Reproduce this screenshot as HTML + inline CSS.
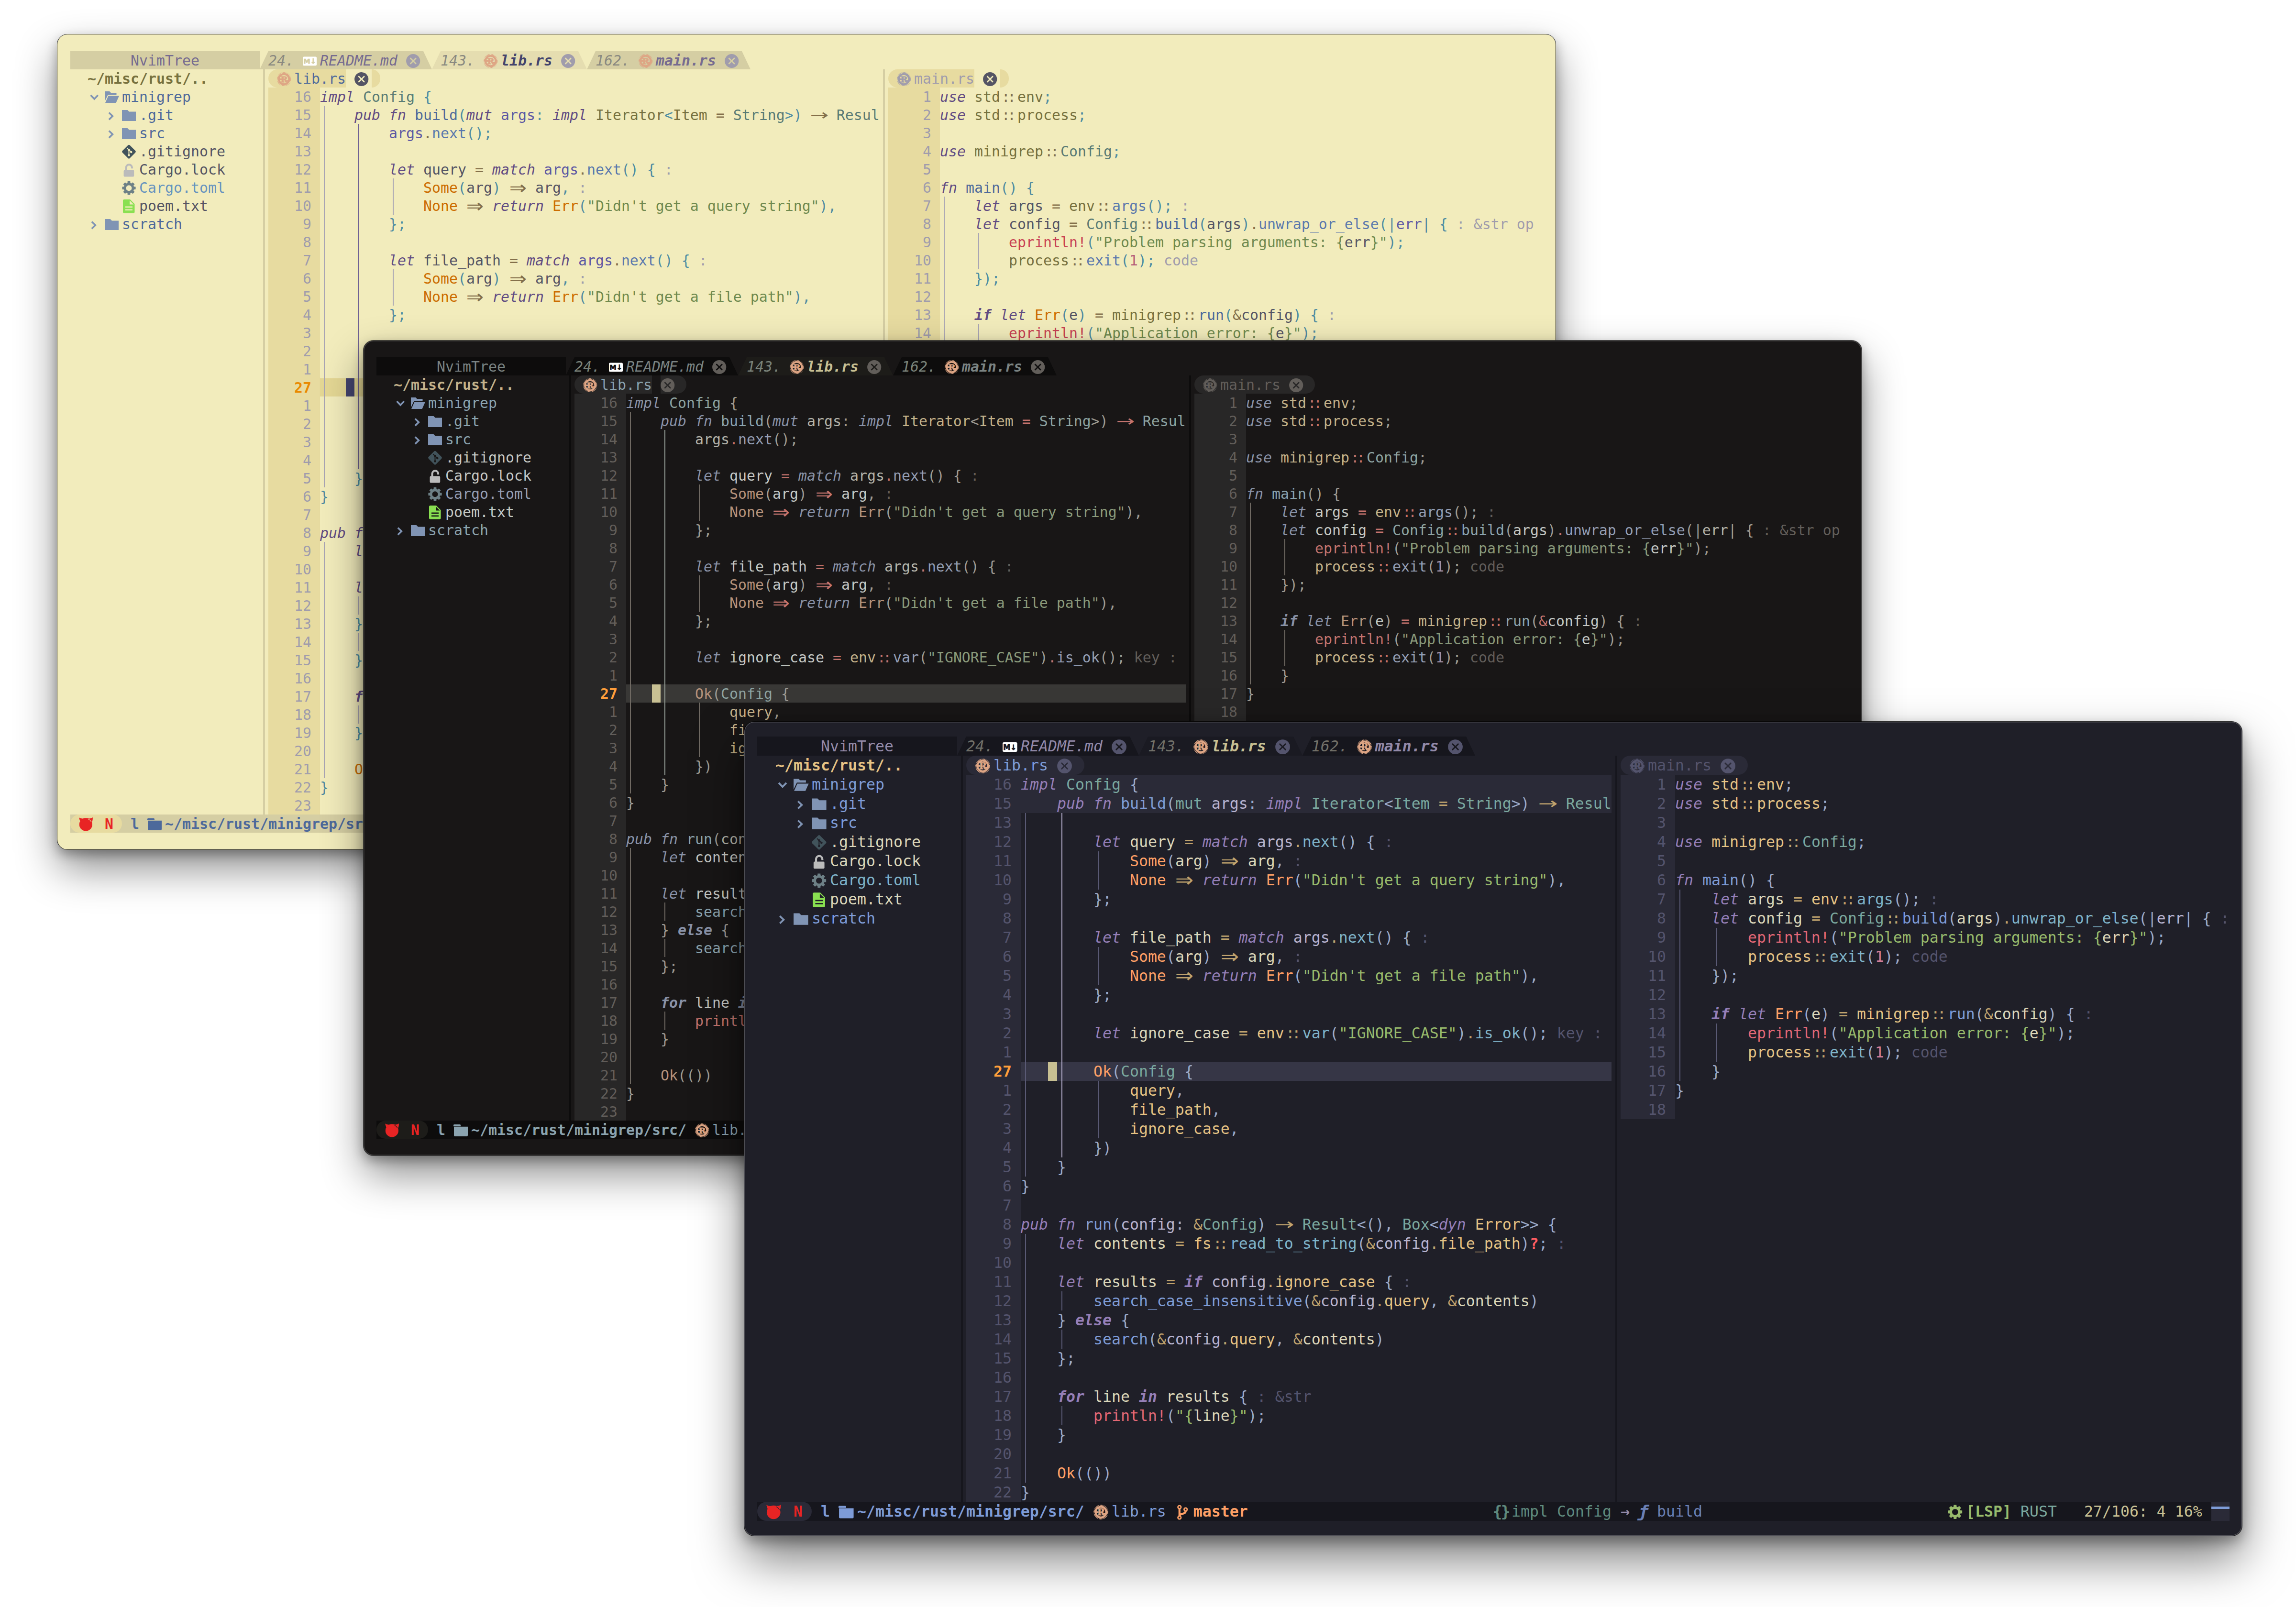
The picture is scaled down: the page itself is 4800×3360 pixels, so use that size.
<!DOCTYPE html>
<html lang="en"><head><meta charset="utf-8"><title>kanagawa.nvim</title><style>
html,body{margin:0;padding:0}
body{width:4800px;height:3360px;background:#fff;position:relative;overflow:hidden;font-family:"DejaVu Sans Mono","Liberation Mono",monospace}
.w{position:absolute;border-radius:21px;background:var(--bg);color:var(--fg);overflow:hidden;box-shadow:0 0 0 1px rgba(0,0,0,.75),0 40px 85px rgba(0,0,0,.44),0 10px 24px rgba(0,0,0,.32)}
.w.act{box-shadow:0 0 0 1px rgba(0,0,0,.8),0 50px 100px rgba(0,0,0,.5),0 12px 28px rgba(0,0,0,.32)}
.D:after,.W:after{content:"";position:absolute;inset:0;border-radius:21px;box-shadow:inset 0 0 0 1.500px rgba(255,255,255,.22);pointer-events:none}
.g{position:absolute}
.b{position:absolute}
.t{position:absolute;white-space:pre;height:var(--lh);margin-top:var(--ts)}
.t svg{margin-top:calc(0px - var(--ts))}
svg{display:inline-block;vertical-align:top;height:var(--lh);overflow:visible}
.i2{width:calc(var(--cw)*2)}
.i1{width:var(--cw)}
.k{color:var(--k);font-style:italic}.kb{color:var(--k);font-style:italic;font-weight:bold}
.f{color:var(--f)}.fb{color:var(--fb)}.v{color:var(--v)}.p{color:var(--p)}.pu{color:var(--pu)}.o{color:var(--o)}
.c{color:var(--c)}.s{color:var(--s)}.n{color:var(--n)}.m{color:var(--m)}.id{color:var(--id)}.h{color:var(--h)}
.q{color:var(--q);font-weight:bold}
.ty{color:var(--t)}
.ar{display:inline-block;width:calc(var(--cw)*2);text-align:center;font-family:"DejaVu Sans","Liberation Sans",sans-serif}
.a1{transform:scale(1.55,1.02)}.a2{transform:scale(1.45,1.3)}
.dc{display:inline-block;width:calc(var(--cw)*2);letter-spacing:-.19em;padding-left:.095em;box-sizing:border-box}
.nr{color:var(--nr)}.cn{color:var(--cnr);font-weight:bold}
.hf{color:var(--hfg)}
.tn{color:var(--tnum);font-style:italic}.ti{color:var(--tina);font-style:italic}.tb{font-weight:bold}
.ta{color:var(--tact);font-style:italic;font-weight:bold}
.rt{color:var(--root);font-weight:bold}.dr{color:var(--dir)}.tm{color:var(--toml)}
.wf{color:var(--wfg)}.wd{color:var(--wdim)}
.md{color:#e82424;font-weight:bold}.sb{color:var(--stfg);font-weight:bold}.sf{color:var(--stfg)}.sg{color:var(--br);font-weight:bold}
.s1{color:var(--c1)}.s2{color:var(--c2);font-weight:bold}.s3{color:var(--c3)}.s3 i{font-weight:bold;display:inline-block;transform:scale(1.15,1.05)}.sl{color:var(--lsp);font-weight:bold}.sft{color:var(--ft)}.sp{color:var(--pos)}
.L{--bg:#f2ecbc;--fg:#545464;--gut:#e7dba0;--nr:#a09cac;--cl:#e4d794;--cnr:#e98a00;--sep:#d5cea3;--hbg:#d5cea3;--hfg:#766b90;--tab:#d5cea3;--tsel:#e5ddb0;--stl:#d5cea3;--pill:#e7dba0;--cur:#43436c;--ig:#a9a5b4;--igs:#6d5f93;--ctx:#e7dba0;--k:#624c83;--t:#597b75;--f:#4d699b;--fb:#5a78ad;--v:#545464;--p:#5d57a3;--pu:#4e8ca2;--o:#836f4a;--c:#cc6d00;--s:#6f894e;--n:#b35b79;--m:#c84053;--id:#77713f;--h:#a09cac;--q:#c84053;--tnum:#8a8980;--tina:#766b90;--tact:#43436c;--xc:#a09cac;--xx:#d5cea3;--wxc:#545464;--wxx:#f2ecbc;--wfg:#4d699b;--wdim:#a09cac;--root:#77713f;--dir:#4d699b;--toml:#6693bf;--stfg:#4d699b;--br:#cc6d00;--mdfg:#d5cea3;--c1:#5e857a;--c2:#766b90;--c3:#4d699b;--lsp:#6f894e;--ft:#597b75;--pos:#77713f;--sbar:#4d699b;--xs:#e5ddb0;--mp:#e7dba0}
.D{--bg:#181616;--fg:#c5c9c5;--gut:#282727;--nr:#625e5a;--cl:#393836;--cnr:#ff9e3b;--sep:#0d0c0c;--hbg:#0d0c0c;--hfg:#7a8382;--tab:#0d0c0c;--tsel:#1d1c19;--stl:#0d0c0c;--pill:#282727;--cur:#c8c093;--ig:#6f6962;--igs:#939c95;--ctx:#282727;--k:#8992a7;--t:#8ea4a2;--f:#8ba4b0;--fb:#949fb5;--v:#c5c9c5;--p:#b4b4ab;--pu:#9e9b93;--o:#c4746e;--c:#b6927b;--s:#8a9a7b;--n:#a292a3;--m:#c4746e;--id:#c4b28a;--h:#625e5a;--q:#c4746e;--tnum:#7a837a;--tina:#7a8382;--tact:#c8c093;--xc:#625e5a;--xx:#0d0c0c;--wxc:#625e5a;--wxx:#282727;--wfg:#8ba4b0;--wdim:#625e5a;--root:#c4b28a;--dir:#8ba4b0;--toml:#949fb5;--stfg:#8ba4b0;--br:#b6927b;--mdfg:#0d0c0c;--c1:#6f8583;--c2:#7a8382;--c3:#72858f;--lsp:#8a9a7b;--ft:#8ea4a2;--pos:#c4b28a;--sbar:#8ba4b0;--xs:#1d1c19;--mp:#1d1c19}
.W{--bg:#1f1f28;--fg:#dcd7ba;--gut:#2a2a37;--nr:#54546d;--cl:#363646;--cnr:#ff9e3b;--sep:#16161d;--hbg:#16161d;--hfg:#938aa9;--tab:#16161d;--tsel:#1a1a22;--stl:#16161d;--pill:#2a2a37;--cur:#c8c093;--ig:#5a5a75;--igs:#b0aac8;--ctx:#2a2a37;--k:#957fb8;--t:#7aa89f;--f:#7e9cd8;--fb:#7fb4ca;--v:#dcd7ba;--p:#b8b4d0;--pu:#9cabca;--o:#c0a36e;--c:#ffa066;--s:#98bb6c;--n:#d27e99;--m:#e46876;--id:#e6c384;--h:#54546d;--q:#ff5d62;--tnum:#727169;--tina:#938aa9;--tact:#c8c093;--xc:#54546d;--xx:#16161d;--wxc:#54546d;--wxx:#2a2a37;--wfg:#7e9cd8;--wdim:#54546d;--root:#e6c384;--dir:#7e9cd8;--toml:#7fb4ca;--stfg:#7e9cd8;--br:#ffa066;--mdfg:#16161d;--c1:#5f8a7e;--c2:#938aa9;--c3:#6a80b5;--lsp:#98bb6c;--ft:#7aa89f;--pos:#c8c093;--sbar:#7e9cd8;--xs:#1a1a22;--mp:#2a2a37}
</style></head><body>
<div class="w L" style="left:120px;top:72px;width:3132px;height:1704px"><div class="g" style="left:27px;top:35px;font-size:29.9px;line-height:38px;--cw:18px;--lh:38px;--ts:1px"><div class="b" style="left:403px;top:38px;width:4px;height:1558px;background:var(--sep);"></div>
<div class="b" style="left:1699px;top:38px;width:4px;height:1558px;background:var(--sep);"></div>
<div class="b" style="left:414px;top:76px;width:108px;height:1520px;background:var(--gut);"></div>
<div class="b" style="left:1710px;top:76px;width:108px;height:684px;background:var(--gut);"></div>
<div class="b" style="left:0px;top:0px;width:396px;height:38px;background:var(--hbg);"></div>
<div class="b" style="left:396px;top:0px;width:360px;height:38px;background:var(--tab);clip-path:polygon(18px 0,calc(100% - 18px) 0,100% 100%,0 100%)"></div>
<div class="b" style="left:756px;top:0px;width:324px;height:38px;background:var(--tsel);clip-path:polygon(18px 0,calc(100% - 18px) 0,100% 100%,0 100%)"></div>
<div class="b" style="left:1080px;top:0px;width:342px;height:38px;background:var(--tab);clip-path:polygon(18px 0,calc(100% - 18px) 0,100% 100%,0 100%)"></div>
<div class="b" style="left:414px;top:38px;width:162px;height:38px;background:var(--pill);border-radius:19px 0 0 19px"></div>
<div class="b" style="left:630px;top:38px;width:18px;height:38px;background:var(--pill);border-radius:0 19px 19px 0"></div>
<div class="b" style="left:1710px;top:38px;width:180px;height:38px;background:var(--pill);border-radius:19px 0 0 19px"></div>
<div class="b" style="left:1944px;top:38px;width:18px;height:38px;background:var(--pill);border-radius:0 19px 19px 0"></div>
<div class="b" style="left:522px;top:684px;width:1170px;height:38px;background:var(--cl);"></div>
<div class="b" style="left:576px;top:684px;width:18px;height:38px;background:var(--cur);"></div>
<div class="b" style="left:530px;top:114px;width:2px;height:798px;background:var(--ig);"></div>
<div class="b" style="left:530px;top:1026px;width:2px;height:494px;background:var(--ig);"></div>
<div class="b" style="left:602px;top:152px;width:2px;height:722px;background:var(--igs);"></div>
<div class="b" style="left:602px;top:1140px;width:2px;height:38px;background:var(--ig);"></div>
<div class="b" style="left:602px;top:1216px;width:2px;height:38px;background:var(--ig);"></div>
<div class="b" style="left:602px;top:1368px;width:2px;height:38px;background:var(--ig);"></div>
<div class="b" style="left:674px;top:266px;width:2px;height:76px;background:var(--ig);"></div>
<div class="b" style="left:674px;top:456px;width:2px;height:76px;background:var(--ig);"></div>
<div class="b" style="left:674px;top:722px;width:2px;height:114px;background:var(--ig);"></div>
<div class="b" style="left:1826px;top:304px;width:2px;height:380px;background:var(--ig);"></div>
<div class="b" style="left:1898px;top:380px;width:2px;height:76px;background:var(--ig);"></div>
<div class="b" style="left:1898px;top:570px;width:2px;height:76px;background:var(--ig);"></div>
<div class="b" style="left:0px;top:1596px;width:3078px;height:38px;background:var(--stl);"></div>
<div class="b" style="left:0px;top:1596px;width:108px;height:38px;background:var(--mp);border-radius:19px"></div>
<div class="b" style="left:3042px;top:1596px;width:36px;height:38px;background:var(--pill);"></div>
<div class="b" style="left:3042px;top:1606px;width:36px;height:5px;background:var(--sbar);"></div>
<div class="t" style="left:0px;top:0px"><span class="hf">       NvimTree</span></div>
<div class="t" style="left:414px;top:0px"><span class="tn">24. </span><svg class="i2" viewBox="0 0 36 38"><rect x="0" y="11.500" width="29" height="18.800" rx="2.500" fill="#fff"/><text x="14.500" y="26.300" text-anchor="middle" font-size="14.500" font-weight="bold" font-family="DejaVu Sans,Liberation Sans,sans-serif" fill="var(--mdfg)" stroke="var(--mdfg)" stroke-width=".7">M↓</text></svg><span class="ti">README.md </span><svg class="i2" viewBox="0 0 36 38"><circle cx="14.700" cy="20.500" r="14.600" fill="var(--xc)"/><path stroke="var(--xx)" stroke-width="2.700" stroke-linecap="round" d="M9.200 15l11 11M20.200 15l-11 11"/></svg>  <span class="tn">143. </span><svg class="i2" viewBox="0 0 36 38"><circle cx="14.700" cy="20.500" r="13.300" fill="none" stroke="#dea584" stroke-width="2.600" stroke-dasharray="1.450 1.162"/><circle cx="14.700" cy="20.500" r="10.600" fill="none" stroke="#dea584" stroke-width="3.800"/><path fill="#dea584" d="M5 19h5v3h-5zM20 22.500h4.500v2.500h-4.500z"/><text x="15" y="26.800" text-anchor="middle" font-size="17.500" font-weight="bold" font-family="DejaVu Serif,Liberation Serif,serif" fill="#dea584" stroke="#dea584" stroke-width=".8">R</text></svg><span class="ta">lib.rs </span><svg class="i2" viewBox="0 0 36 38"><circle cx="14.700" cy="20.500" r="14.600" fill="var(--xc)"/><path stroke="var(--xs)" stroke-width="2.700" stroke-linecap="round" d="M9.200 15l11 11M20.200 15l-11 11"/></svg>  <span class="tn">162. </span><svg class="i2" viewBox="0 0 36 38"><circle cx="14.700" cy="20.500" r="13.300" fill="none" stroke="#dea584" stroke-width="2.600" stroke-dasharray="1.450 1.162"/><circle cx="14.700" cy="20.500" r="10.600" fill="none" stroke="#dea584" stroke-width="3.800"/><path fill="#dea584" d="M5 19h5v3h-5zM20 22.500h4.500v2.500h-4.500z"/><text x="15" y="26.800" text-anchor="middle" font-size="17.500" font-weight="bold" font-family="DejaVu Serif,Liberation Serif,serif" fill="#dea584" stroke="#dea584" stroke-width=".8">R</text></svg><span class="ti tb">main.rs </span><svg class="i2" viewBox="0 0 36 38"><circle cx="14.700" cy="20.500" r="14.600" fill="var(--xc)"/><path stroke="var(--xx)" stroke-width="2.700" stroke-linecap="round" d="M9.200 15l11 11M20.200 15l-11 11"/></svg></div>
<div class="t" style="left:0px;top:38px">  <span class="rt">~/misc/rust/..</span></div>
<div class="t" style="left:0px;top:76px">  <svg class="i2" viewBox="0 0 36 38"><path fill="none" stroke="#8094b4" stroke-width="3.6" d="M6.6 16l7.6 7.8 7.6-7.8"/></svg><svg class="i2" viewBox="0 0 36 38"><path fill="#8094b4" d="M0 8h10l3 3h11.5v4.5H6.5L0 29zM7.5 17.5H30l-6.5 14.5H1z"/></svg><span class="dr">minigrep</span></div>
<div class="t" style="left:0px;top:114px">    <svg class="i2" viewBox="0 0 36 38"><path fill="none" stroke="#8094b4" stroke-width="3.6" d="M8.8 14.5l7.6 7.3-7.6 7.3"/></svg><svg class="i2" viewBox="0 0 36 38"><path fill="#8094b4" d="M0 9h11.5l3.5 3.5h14v19.5h-29z"/></svg><span class="dr">.git</span></div>
<div class="t" style="left:0px;top:152px">    <svg class="i2" viewBox="0 0 36 38"><path fill="none" stroke="#8094b4" stroke-width="3.6" d="M8.8 14.5l7.6 7.3-7.6 7.3"/></svg><svg class="i2" viewBox="0 0 36 38"><path fill="#8094b4" d="M0 9h11.5l3.5 3.5h14v19.5h-29z"/></svg><span class="dr">src</span></div>
<div class="t" style="left:0px;top:190px">      <svg class="i2" viewBox="0 0 36 38"><rect x="3.6" y="9.3" width="21.8" height="21.8" rx="2.6" fill="#41535b" transform="rotate(45 14.5 20.2)"/><path fill="none" stroke="var(--bg)" stroke-width="2" d="M10.5 12.5l4 4v11M14.5 16.5l4.5 4"/><circle cx="14.5" cy="27.5" r="2.2" fill="var(--bg)"/><circle cx="19.3" cy="21" r="2.2" fill="var(--bg)"/><circle cx="14.5" cy="16.3" r="2.2" fill="var(--bg)"/></svg>.gitignore</div>
<div class="t" style="left:0px;top:228px">      <svg class="i2" viewBox="0 0 36 38"><rect x="3.6" y="20.5" width="21.6" height="14" rx="2" fill="#bbb"/><path fill="none" stroke="#bbb" stroke-width="4" d="M8.5 21v-5.5a6.3 6.3 0 0 1 12.6 0v1.8"/></svg>Cargo.lock</div>
<div class="t" style="left:0px;top:266px">      <svg class="i2" viewBox="0 0 36 38"><path fill="#6d8086" fill-rule="evenodd" d="M25.0 17.2L28.6 17.4L28.6 23.0L25.0 23.2L24.1 25.5L26.5 28.2L22.5 32.2L19.8 29.8L17.5 30.7L17.3 34.3L11.7 34.3L11.5 30.7L9.2 29.8L6.5 32.2L2.5 28.2L4.9 25.5L4.0 23.2L0.4 23.0L0.4 17.4L4.0 17.2L4.9 14.9L2.5 12.2L6.5 8.2L9.2 10.6L11.5 9.7L11.7 6.1L17.3 6.1L17.5 9.7L19.8 10.6L22.5 8.2L26.5 12.2L24.1 14.9ZM8.5 20.2a6.0 6.0 0 1 0 12.0 0a6.0 6.0 0 1 0 -12.0 0Z"/></svg><span class="tm">Cargo.toml</span></div>
<div class="t" style="left:0px;top:304px">      <svg class="i2" viewBox="0 0 36 38"><path fill="#89e051" fill-rule="evenodd" d="M4.5 6h12.5l9.5 9.5v16.5a2.5 2.5 0 0 1-2.500 2.500h-19.500a2.500 2.500 0 0 1-2.500-2.500v-23.500a2.500 2.500 0 0 1 2.500-2.500zM16 8v8.500h8.500zM7 20.500v2.600h15v-2.600zM7 26.500v2.600h15v-2.600z"/></svg>poem.txt</div>
<div class="t" style="left:0px;top:342px">  <svg class="i2" viewBox="0 0 36 38"><path fill="none" stroke="#8094b4" stroke-width="3.6" d="M8.8 14.5l7.6 7.3-7.6 7.3"/></svg><svg class="i2" viewBox="0 0 36 38"><path fill="#8094b4" d="M0 9h11.5l3.5 3.5h14v19.5h-29z"/></svg><span class="dr">scratch</span></div>
<div class="t" style="left:432px;top:38px"><svg class="i2" viewBox="0 0 36 38"><circle cx="14.700" cy="20.500" r="13.300" fill="none" stroke="#dea584" stroke-width="2.600" stroke-dasharray="1.450 1.162"/><circle cx="14.700" cy="20.500" r="10.600" fill="none" stroke="#dea584" stroke-width="3.800"/><path fill="#dea584" d="M5 19h5v3h-5zM20 22.500h4.500v2.500h-4.500z"/><text x="15" y="26.800" text-anchor="middle" font-size="17.500" font-weight="bold" font-family="DejaVu Serif,Liberation Serif,serif" fill="#dea584" stroke="#dea584" stroke-width=".8">R</text></svg><span class="wf">lib.rs </span><svg class="i2" viewBox="0 0 36 38"><circle cx="14.700" cy="20.500" r="14.600" fill="var(--wxc)"/><path stroke="var(--wxx)" stroke-width="2.700" stroke-linecap="round" d="M9.200 15l11 11M20.200 15l-11 11"/></svg></div>
<div class="t" style="left:1728px;top:38px"><svg class="i2" viewBox="0 0 36 38"><circle cx="14.700" cy="20.500" r="13.300" fill="none" stroke="var(--wdim)" stroke-width="2.600" stroke-dasharray="1.450 1.162"/><circle cx="14.700" cy="20.500" r="10.600" fill="none" stroke="var(--wdim)" stroke-width="3.800"/><path fill="var(--wdim)" d="M5 19h5v3h-5zM20 22.500h4.500v2.500h-4.500z"/><text x="15" y="26.800" text-anchor="middle" font-size="17.500" font-weight="bold" font-family="DejaVu Serif,Liberation Serif,serif" fill="var(--wdim)" stroke="var(--wdim)" stroke-width=".8">R</text></svg><span class="wd">main.rs </span><svg class="i2" viewBox="0 0 36 38"><circle cx="14.700" cy="20.500" r="14.600" fill="var(--wxc)"/><path stroke="var(--wxx)" stroke-width="2.700" stroke-linecap="round" d="M9.200 15l11 11M20.200 15l-11 11"/></svg></div>
<div class="t" style="left:414px;top:76px"><span class="nr">   16 </span><span class="k">impl </span><span class="ty">Config </span><span class="pu">{</span></div>
<div class="t" style="left:414px;top:114px"><span class="nr">   15 </span>    <span class="k">pub fn </span><span class="f">build</span><span class="pu">(</span><span class="k">mut </span><span class="p">args</span><span class="pu">: </span><span class="k">impl </span><span class="id">Iterator</span><span class="pu">&lt;</span><span class="id">Item </span><span class="o">= </span><span class="ty">String</span><span class="pu">&gt;) </span><span class="o ar a1">→</span> <span class="ty">Resul</span></div>
<div class="t" style="left:414px;top:152px"><span class="nr">   14 </span>        <span class="p">args</span><span class="o">.</span><span class="fb">next</span><span class="pu">();</span></div>
<div class="t" style="left:414px;top:190px"><span class="nr">   13 </span></div>
<div class="t" style="left:414px;top:228px"><span class="nr">   12 </span>        <span class="k">let </span><span class="v">query </span><span class="o">= </span><span class="k">match </span><span class="p">args</span><span class="o">.</span><span class="fb">next</span><span class="pu">() {</span><span class="h"> :</span></div>
<div class="t" style="left:414px;top:266px"><span class="nr">   11 </span>            <span class="c">Some</span><span class="pu">(</span><span class="v">arg</span><span class="pu">) </span><span class="o ar a2">⇒</span> <span class="v">arg</span><span class="pu">,</span><span class="h"> :</span></div>
<div class="t" style="left:414px;top:304px"><span class="nr">   10 </span>            <span class="c">None </span><span class="o ar a2">⇒</span> <span class="k">return </span><span class="c">Err</span><span class="pu">(</span><span class="s">"Didn't get a query string"</span><span class="pu">),</span></div>
<div class="t" style="left:414px;top:342px"><span class="nr">    9 </span>        <span class="pu">};</span></div>
<div class="t" style="left:414px;top:380px"><span class="nr">    8 </span></div>
<div class="t" style="left:414px;top:418px"><span class="nr">    7 </span>        <span class="k">let </span><span class="v">file_path </span><span class="o">= </span><span class="k">match </span><span class="p">args</span><span class="o">.</span><span class="fb">next</span><span class="pu">() {</span><span class="h"> :</span></div>
<div class="t" style="left:414px;top:456px"><span class="nr">    6 </span>            <span class="c">Some</span><span class="pu">(</span><span class="v">arg</span><span class="pu">) </span><span class="o ar a2">⇒</span> <span class="v">arg</span><span class="pu">,</span><span class="h"> :</span></div>
<div class="t" style="left:414px;top:494px"><span class="nr">    5 </span>            <span class="c">None </span><span class="o ar a2">⇒</span> <span class="k">return </span><span class="c">Err</span><span class="pu">(</span><span class="s">"Didn't get a file path"</span><span class="pu">),</span></div>
<div class="t" style="left:414px;top:532px"><span class="nr">    4 </span>        <span class="pu">};</span></div>
<div class="t" style="left:414px;top:570px"><span class="nr">    3 </span></div>
<div class="t" style="left:414px;top:608px"><span class="nr">    2 </span>        <span class="k">let </span><span class="v">ignore_case </span><span class="o">= </span><span class="id">env</span><span class="o dc">::</span><span class="fb">var</span><span class="pu">(</span><span class="s">"IGNORE_CASE"</span><span class="pu">)</span><span class="o">.</span><span class="fb">is_ok</span><span class="pu">();</span><span class="h"> key :</span></div>
<div class="t" style="left:414px;top:646px"><span class="nr">    1 </span></div>
<div class="t" style="left:414px;top:684px"><span class="cn">   27 </span>        <span class="c">Ok</span><span class="pu">(</span><span class="ty">Config </span><span class="pu">{</span></div>
<div class="t" style="left:414px;top:722px"><span class="nr">    1 </span>            <span class="id">query</span><span class="pu">,</span></div>
<div class="t" style="left:414px;top:760px"><span class="nr">    2 </span>            <span class="id">file_path</span><span class="pu">,</span></div>
<div class="t" style="left:414px;top:798px"><span class="nr">    3 </span>            <span class="id">ignore_case</span><span class="pu">,</span></div>
<div class="t" style="left:414px;top:836px"><span class="nr">    4 </span>        <span class="pu">})</span></div>
<div class="t" style="left:414px;top:874px"><span class="nr">    5 </span>    <span class="pu">}</span></div>
<div class="t" style="left:414px;top:912px"><span class="nr">    6 </span><span class="pu">}</span></div>
<div class="t" style="left:414px;top:950px"><span class="nr">    7 </span></div>
<div class="t" style="left:414px;top:988px"><span class="nr">    8 </span><span class="k">pub fn </span><span class="f">run</span><span class="pu">(</span><span class="p">config</span><span class="pu">: </span><span class="o">&amp;</span><span class="ty">Config</span><span class="pu">) </span><span class="o ar a1">→</span> <span class="ty">Result</span><span class="pu">&lt;(), </span><span class="ty">Box</span><span class="pu">&lt;</span><span class="k">dyn </span><span class="id">Error</span><span class="pu">&gt;&gt; {</span></div>
<div class="t" style="left:414px;top:1026px"><span class="nr">    9 </span>    <span class="k">let </span><span class="v">contents </span><span class="o">= </span><span class="id">fs</span><span class="o dc">::</span><span class="fb">read_to_string</span><span class="pu">(</span><span class="o">&amp;</span><span class="p">config</span><span class="o">.</span><span class="id">file_path</span><span class="pu">)</span><span class="q">?</span><span class="pu">;</span><span class="h"> :</span></div>
<div class="t" style="left:414px;top:1064px"><span class="nr">   10 </span></div>
<div class="t" style="left:414px;top:1102px"><span class="nr">   11 </span>    <span class="k">let </span><span class="v">results </span><span class="o">= </span><span class="kb">if </span><span class="p">config</span><span class="o">.</span><span class="id">ignore_case </span><span class="pu">{</span><span class="h"> :</span></div>
<div class="t" style="left:414px;top:1140px"><span class="nr">   12 </span>        <span class="f">search_case_insensitive</span><span class="pu">(</span><span class="o">&amp;</span><span class="p">config</span><span class="o">.</span><span class="id">query</span><span class="pu">, </span><span class="o">&amp;</span><span class="v">contents</span><span class="pu">)</span></div>
<div class="t" style="left:414px;top:1178px"><span class="nr">   13 </span>    <span class="pu">} </span><span class="kb">else </span><span class="pu">{</span></div>
<div class="t" style="left:414px;top:1216px"><span class="nr">   14 </span>        <span class="f">search</span><span class="pu">(</span><span class="o">&amp;</span><span class="p">config</span><span class="o">.</span><span class="id">query</span><span class="pu">, </span><span class="o">&amp;</span><span class="v">contents</span><span class="pu">)</span></div>
<div class="t" style="left:414px;top:1254px"><span class="nr">   15 </span>    <span class="pu">};</span></div>
<div class="t" style="left:414px;top:1292px"><span class="nr">   16 </span></div>
<div class="t" style="left:414px;top:1330px"><span class="nr">   17 </span>    <span class="kb">for </span><span class="v">line </span><span class="kb">in </span><span class="v">results </span><span class="pu">{</span><span class="h"> : &amp;str</span></div>
<div class="t" style="left:414px;top:1368px"><span class="nr">   18 </span>        <span class="m">println!</span><span class="pu">(</span><span class="s">"{</span><span class="v">line</span><span class="s">}"</span><span class="pu">);</span></div>
<div class="t" style="left:414px;top:1406px"><span class="nr">   19 </span>    <span class="pu">}</span></div>
<div class="t" style="left:414px;top:1444px"><span class="nr">   20 </span></div>
<div class="t" style="left:414px;top:1482px"><span class="nr">   21 </span>    <span class="c">Ok</span><span class="pu">(())</span></div>
<div class="t" style="left:414px;top:1520px"><span class="nr">   22 </span><span class="pu">}</span></div>
<div class="t" style="left:414px;top:1558px"><span class="nr">   23 </span></div>
<div class="t" style="left:1710px;top:76px"><span class="nr">    1 </span><span class="k">use </span><span class="id">std</span><span class="o dc">::</span><span class="id">env</span><span class="pu">;</span></div>
<div class="t" style="left:1710px;top:114px"><span class="nr">    2 </span><span class="k">use </span><span class="id">std</span><span class="o dc">::</span><span class="id">process</span><span class="pu">;</span></div>
<div class="t" style="left:1710px;top:152px"><span class="nr">    3 </span></div>
<div class="t" style="left:1710px;top:190px"><span class="nr">    4 </span><span class="k">use </span><span class="id">minigrep</span><span class="o dc">::</span><span class="ty">Config</span><span class="pu">;</span></div>
<div class="t" style="left:1710px;top:228px"><span class="nr">    5 </span></div>
<div class="t" style="left:1710px;top:266px"><span class="nr">    6 </span><span class="k">fn </span><span class="f">main</span><span class="pu">() {</span></div>
<div class="t" style="left:1710px;top:304px"><span class="nr">    7 </span>    <span class="k">let </span><span class="v">args </span><span class="o">= </span><span class="id">env</span><span class="o dc">::</span><span class="fb">args</span><span class="pu">();</span><span class="h"> :</span></div>
<div class="t" style="left:1710px;top:342px"><span class="nr">    8 </span>    <span class="k">let </span><span class="v">config </span><span class="o">= </span><span class="ty">Config</span><span class="o dc">::</span><span class="f">build</span><span class="pu">(</span><span class="v">args</span><span class="pu">)</span><span class="o">.</span><span class="fb">unwrap_or_else</span><span class="pu">(|</span><span class="p">err</span><span class="pu">| {</span><span class="h"> : &amp;str op</span></div>
<div class="t" style="left:1710px;top:380px"><span class="nr">    9 </span>        <span class="m">eprintln!</span><span class="pu">(</span><span class="s">"Problem parsing arguments: {</span><span class="v">err</span><span class="s">}"</span><span class="pu">);</span></div>
<div class="t" style="left:1710px;top:418px"><span class="nr">   10 </span>        <span class="id">process</span><span class="o dc">::</span><span class="fb">exit</span><span class="pu">(</span><span class="n">1</span><span class="pu">);</span><span class="h"> code</span></div>
<div class="t" style="left:1710px;top:456px"><span class="nr">   11 </span>    <span class="pu">});</span></div>
<div class="t" style="left:1710px;top:494px"><span class="nr">   12 </span></div>
<div class="t" style="left:1710px;top:532px"><span class="nr">   13 </span>    <span class="kb">if </span><span class="k">let </span><span class="c">Err</span><span class="pu">(</span><span class="v">e</span><span class="pu">) </span><span class="o">= </span><span class="id">minigrep</span><span class="o dc">::</span><span class="f">run</span><span class="pu">(</span><span class="o">&amp;</span><span class="v">config</span><span class="pu">) {</span><span class="h"> :</span></div>
<div class="t" style="left:1710px;top:570px"><span class="nr">   14 </span>        <span class="m">eprintln!</span><span class="pu">(</span><span class="s">"Application error: {</span><span class="v">e</span><span class="s">}"</span><span class="pu">);</span></div>
<div class="t" style="left:1710px;top:608px"><span class="nr">   15 </span>        <span class="id">process</span><span class="o dc">::</span><span class="fb">exit</span><span class="pu">(</span><span class="n">1</span><span class="pu">);</span><span class="h"> code</span></div>
<div class="t" style="left:1710px;top:646px"><span class="nr">   16 </span>    <span class="pu">}</span></div>
<div class="t" style="left:1710px;top:684px"><span class="nr">   17 </span><span class="pu">}</span></div>
<div class="t" style="left:1710px;top:722px"><span class="nr">   18 </span></div>
<div class="t" style="left:0px;top:1596px"> <svg class="i2" viewBox="0 0 36 38"><circle cx="14.400" cy="20.900" r="13.600" fill="#e82424"/><path fill="#e82424" d="M.2 6.200C.8 9 1.600 12 3 15L9.500 8.600C5.800 8.600 2.600 7.800.2 6.200z"/><path fill="#e82424" d="M28.700 6C29.300 9.800 28.500 13.500 26.800 16.800L18 8.200C22.500 8.800 26.300 8 28.700 6z"/><path fill="none" stroke="var(--mp)" stroke-width="1.200" d="M19.800 9.800c2.800 1.200 5 3.500 6.200 6.300"/></svg> <span class="md">N</span>  <span class="sb">l </span><svg class="i2" viewBox="0 0 36 38"><path fill="var(--stfg)" d="M1.500 8h11a1.500 1.500 0 0 1 1.500 1.500v2.500h-15v-2.500a1.500 1.500 0 0 1 1.500-1.500zM0 12.800h29v18a2 2 0 0 1-2 2h-25a2 2 0 0 1-2-2z"/></svg><span class="sb">~/misc/rust/minigrep/src/ </span><svg class="i2" viewBox="0 0 36 38"><circle cx="14.700" cy="20.500" r="13.300" fill="none" stroke="#dea584" stroke-width="2.600" stroke-dasharray="1.450 1.162"/><circle cx="14.700" cy="20.500" r="10.600" fill="none" stroke="#dea584" stroke-width="3.800"/><path fill="#dea584" d="M5 19h5v3h-5zM20 22.500h4.500v2.500h-4.500z"/><text x="15" y="26.800" text-anchor="middle" font-size="17.500" font-weight="bold" font-family="DejaVu Serif,Liberation Serif,serif" fill="#dea584" stroke="#dea584" stroke-width=".8">R</text></svg><span class="sf">lib.rs </span><svg class="i2" viewBox="0 0 36 38"><g fill="none" stroke="var(--br)"><path stroke-width="4" d="M8.300 14v14M20.500 18.500c0 7.500-12.200 3.500-12.200 10"/><g stroke-width="2.600"><circle cx="8.300" cy="10.700" r="3.100"/><circle cx="8.300" cy="31.300" r="3.100"/><circle cx="20.500" cy="15.300" r="3.100"/></g></g></svg><span class="sg">master</span></div>
<div class="t" style="left:1530px;top:1596px"><svg class="i2" viewBox="0 0 36 38"><text x="15" y="29" text-anchor="middle" font-size="31" font-weight="bold" letter-spacing="-2.500" font-family="DejaVu Sans Mono,Liberation Mono,monospace" fill="var(--c1)">{}</text></svg><span class="s1">impl Config </span><span class="s2">→ </span><span class="s3"><i>ƒ</i> build</span></div>
<div class="t" style="left:2520px;top:1596px"><svg class="i2" viewBox="0 0 36 38"><path fill="var(--lsp)" fill-rule="evenodd" d="M25.0 17.2L28.6 17.4L28.6 23.0L25.0 23.2L24.1 25.5L26.5 28.2L22.5 32.2L19.8 29.8L17.5 30.7L17.3 34.3L11.7 34.3L11.5 30.7L9.2 29.8L6.5 32.2L2.5 28.2L4.9 25.5L4.0 23.2L0.4 23.0L0.4 17.4L4.0 17.2L4.9 14.9L2.5 12.2L6.5 8.2L9.2 10.6L11.5 9.7L11.7 6.1L17.3 6.1L17.5 9.7L19.8 10.6L22.5 8.2L26.5 12.2L24.1 14.9ZM8.5 20.2a6.0 6.0 0 1 0 12.0 0a6.0 6.0 0 1 0 -12.0 0Z"/></svg><span class="sl">[LSP] </span><span class="sft">RUST   </span><span class="sp">27/106: 4 16% </span></div></div></div>
<div class="w D" style="left:760px;top:712px;width:3132px;height:1704px"><div class="g" style="left:27px;top:35px;font-size:29.9px;line-height:38px;--cw:18px;--lh:38px;--ts:1px"><div class="b" style="left:403px;top:38px;width:4px;height:1558px;background:var(--sep);"></div>
<div class="b" style="left:1699px;top:38px;width:4px;height:1558px;background:var(--sep);"></div>
<div class="b" style="left:414px;top:76px;width:108px;height:1520px;background:var(--gut);"></div>
<div class="b" style="left:1710px;top:76px;width:108px;height:684px;background:var(--gut);"></div>
<div class="b" style="left:0px;top:0px;width:396px;height:38px;background:var(--hbg);"></div>
<div class="b" style="left:396px;top:0px;width:360px;height:38px;background:var(--tab);clip-path:polygon(18px 0,calc(100% - 18px) 0,100% 100%,0 100%)"></div>
<div class="b" style="left:756px;top:0px;width:324px;height:38px;background:var(--tsel);clip-path:polygon(18px 0,calc(100% - 18px) 0,100% 100%,0 100%)"></div>
<div class="b" style="left:1080px;top:0px;width:342px;height:38px;background:var(--tab);clip-path:polygon(18px 0,calc(100% - 18px) 0,100% 100%,0 100%)"></div>
<div class="b" style="left:414px;top:38px;width:162px;height:38px;background:var(--pill);border-radius:19px 0 0 19px"></div>
<div class="b" style="left:594px;top:38px;width:54px;height:38px;background:var(--pill);border-radius:0 19px 19px 0"></div>
<div class="b" style="left:1710px;top:38px;width:252px;height:38px;background:var(--pill);border-radius:19px"></div>
<div class="b" style="left:522px;top:684px;width:1170px;height:38px;background:var(--cl);"></div>
<div class="b" style="left:576px;top:684px;width:18px;height:38px;background:var(--cur);"></div>
<div class="b" style="left:530px;top:114px;width:2px;height:798px;background:var(--ig);"></div>
<div class="b" style="left:530px;top:1026px;width:2px;height:494px;background:var(--ig);"></div>
<div class="b" style="left:602px;top:152px;width:2px;height:722px;background:var(--igs);"></div>
<div class="b" style="left:602px;top:1140px;width:2px;height:38px;background:var(--ig);"></div>
<div class="b" style="left:602px;top:1216px;width:2px;height:38px;background:var(--ig);"></div>
<div class="b" style="left:602px;top:1368px;width:2px;height:38px;background:var(--ig);"></div>
<div class="b" style="left:674px;top:266px;width:2px;height:76px;background:var(--ig);"></div>
<div class="b" style="left:674px;top:456px;width:2px;height:76px;background:var(--ig);"></div>
<div class="b" style="left:674px;top:722px;width:2px;height:114px;background:var(--ig);"></div>
<div class="b" style="left:1826px;top:304px;width:2px;height:380px;background:var(--ig);"></div>
<div class="b" style="left:1898px;top:380px;width:2px;height:76px;background:var(--ig);"></div>
<div class="b" style="left:1898px;top:570px;width:2px;height:76px;background:var(--ig);"></div>
<div class="b" style="left:0px;top:1596px;width:3078px;height:38px;background:var(--stl);"></div>
<div class="b" style="left:0px;top:1596px;width:108px;height:38px;background:var(--mp);border-radius:19px"></div>
<div class="b" style="left:3042px;top:1596px;width:36px;height:38px;background:var(--pill);"></div>
<div class="b" style="left:3042px;top:1606px;width:36px;height:5px;background:var(--sbar);"></div>
<div class="t" style="left:0px;top:0px"><span class="hf">       NvimTree</span></div>
<div class="t" style="left:414px;top:0px"><span class="tn">24. </span><svg class="i2" viewBox="0 0 36 38"><rect x="0" y="11.500" width="29" height="18.800" rx="2.500" fill="#fff"/><text x="14.500" y="26.300" text-anchor="middle" font-size="14.500" font-weight="bold" font-family="DejaVu Sans,Liberation Sans,sans-serif" fill="var(--mdfg)" stroke="var(--mdfg)" stroke-width=".7">M↓</text></svg><span class="ti">README.md </span><svg class="i2" viewBox="0 0 36 38"><circle cx="14.700" cy="20.500" r="14.600" fill="var(--xc)"/><path stroke="var(--xx)" stroke-width="2.700" stroke-linecap="round" d="M9.200 15l11 11M20.200 15l-11 11"/></svg>  <span class="tn">143. </span><svg class="i2" viewBox="0 0 36 38"><circle cx="14.700" cy="20.500" r="13.300" fill="none" stroke="#dea584" stroke-width="2.600" stroke-dasharray="1.450 1.162"/><circle cx="14.700" cy="20.500" r="10.600" fill="none" stroke="#dea584" stroke-width="3.800"/><path fill="#dea584" d="M5 19h5v3h-5zM20 22.500h4.500v2.500h-4.500z"/><text x="15" y="26.800" text-anchor="middle" font-size="17.500" font-weight="bold" font-family="DejaVu Serif,Liberation Serif,serif" fill="#dea584" stroke="#dea584" stroke-width=".8">R</text></svg><span class="ta">lib.rs </span><svg class="i2" viewBox="0 0 36 38"><circle cx="14.700" cy="20.500" r="14.600" fill="var(--xc)"/><path stroke="var(--xs)" stroke-width="2.700" stroke-linecap="round" d="M9.200 15l11 11M20.200 15l-11 11"/></svg>  <span class="tn">162. </span><svg class="i2" viewBox="0 0 36 38"><circle cx="14.700" cy="20.500" r="13.300" fill="none" stroke="#dea584" stroke-width="2.600" stroke-dasharray="1.450 1.162"/><circle cx="14.700" cy="20.500" r="10.600" fill="none" stroke="#dea584" stroke-width="3.800"/><path fill="#dea584" d="M5 19h5v3h-5zM20 22.500h4.500v2.500h-4.500z"/><text x="15" y="26.800" text-anchor="middle" font-size="17.500" font-weight="bold" font-family="DejaVu Serif,Liberation Serif,serif" fill="#dea584" stroke="#dea584" stroke-width=".8">R</text></svg><span class="ti tb">main.rs </span><svg class="i2" viewBox="0 0 36 38"><circle cx="14.700" cy="20.500" r="14.600" fill="var(--xc)"/><path stroke="var(--xx)" stroke-width="2.700" stroke-linecap="round" d="M9.200 15l11 11M20.200 15l-11 11"/></svg></div>
<div class="t" style="left:0px;top:38px">  <span class="rt">~/misc/rust/..</span></div>
<div class="t" style="left:0px;top:76px">  <svg class="i2" viewBox="0 0 36 38"><path fill="none" stroke="#8094b4" stroke-width="3.6" d="M6.6 16l7.6 7.8 7.6-7.8"/></svg><svg class="i2" viewBox="0 0 36 38"><path fill="#8094b4" d="M0 8h10l3 3h11.5v4.5H6.5L0 29zM7.5 17.5H30l-6.5 14.5H1z"/></svg><span class="dr">minigrep</span></div>
<div class="t" style="left:0px;top:114px">    <svg class="i2" viewBox="0 0 36 38"><path fill="none" stroke="#8094b4" stroke-width="3.6" d="M8.8 14.5l7.6 7.3-7.6 7.3"/></svg><svg class="i2" viewBox="0 0 36 38"><path fill="#8094b4" d="M0 9h11.5l3.5 3.5h14v19.5h-29z"/></svg><span class="dr">.git</span></div>
<div class="t" style="left:0px;top:152px">    <svg class="i2" viewBox="0 0 36 38"><path fill="none" stroke="#8094b4" stroke-width="3.6" d="M8.8 14.5l7.6 7.3-7.6 7.3"/></svg><svg class="i2" viewBox="0 0 36 38"><path fill="#8094b4" d="M0 9h11.5l3.5 3.5h14v19.5h-29z"/></svg><span class="dr">src</span></div>
<div class="t" style="left:0px;top:190px">      <svg class="i2" viewBox="0 0 36 38"><rect x="3.6" y="9.3" width="21.8" height="21.8" rx="2.6" fill="#41535b" transform="rotate(45 14.5 20.2)"/><path fill="none" stroke="var(--bg)" stroke-width="2" d="M10.5 12.5l4 4v11M14.5 16.5l4.5 4"/><circle cx="14.5" cy="27.5" r="2.2" fill="var(--bg)"/><circle cx="19.3" cy="21" r="2.2" fill="var(--bg)"/><circle cx="14.5" cy="16.3" r="2.2" fill="var(--bg)"/></svg>.gitignore</div>
<div class="t" style="left:0px;top:228px">      <svg class="i2" viewBox="0 0 36 38"><rect x="3.6" y="20.5" width="21.6" height="14" rx="2" fill="#bbb"/><path fill="none" stroke="#bbb" stroke-width="4" d="M8.5 21v-5.5a6.3 6.3 0 0 1 12.6 0v1.8"/></svg>Cargo.lock</div>
<div class="t" style="left:0px;top:266px">      <svg class="i2" viewBox="0 0 36 38"><path fill="#6d8086" fill-rule="evenodd" d="M25.0 17.2L28.6 17.4L28.6 23.0L25.0 23.2L24.1 25.5L26.5 28.2L22.5 32.2L19.8 29.8L17.5 30.7L17.3 34.3L11.7 34.3L11.5 30.7L9.2 29.8L6.5 32.2L2.5 28.2L4.9 25.5L4.0 23.2L0.4 23.0L0.4 17.4L4.0 17.2L4.9 14.9L2.5 12.2L6.5 8.2L9.2 10.6L11.5 9.7L11.7 6.1L17.3 6.1L17.5 9.7L19.8 10.6L22.5 8.2L26.5 12.2L24.1 14.9ZM8.5 20.2a6.0 6.0 0 1 0 12.0 0a6.0 6.0 0 1 0 -12.0 0Z"/></svg><span class="tm">Cargo.toml</span></div>
<div class="t" style="left:0px;top:304px">      <svg class="i2" viewBox="0 0 36 38"><path fill="#89e051" fill-rule="evenodd" d="M4.5 6h12.5l9.5 9.5v16.5a2.5 2.5 0 0 1-2.500 2.500h-19.500a2.500 2.500 0 0 1-2.500-2.500v-23.500a2.500 2.500 0 0 1 2.500-2.500zM16 8v8.500h8.500zM7 20.500v2.600h15v-2.600zM7 26.500v2.600h15v-2.600z"/></svg>poem.txt</div>
<div class="t" style="left:0px;top:342px">  <svg class="i2" viewBox="0 0 36 38"><path fill="none" stroke="#8094b4" stroke-width="3.6" d="M8.8 14.5l7.6 7.3-7.6 7.3"/></svg><svg class="i2" viewBox="0 0 36 38"><path fill="#8094b4" d="M0 9h11.5l3.5 3.5h14v19.5h-29z"/></svg><span class="dr">scratch</span></div>
<div class="t" style="left:432px;top:38px"><svg class="i2" viewBox="0 0 36 38"><circle cx="14.700" cy="20.500" r="13.300" fill="none" stroke="#dea584" stroke-width="2.600" stroke-dasharray="1.450 1.162"/><circle cx="14.700" cy="20.500" r="10.600" fill="none" stroke="#dea584" stroke-width="3.800"/><path fill="#dea584" d="M5 19h5v3h-5zM20 22.500h4.500v2.500h-4.500z"/><text x="15" y="26.800" text-anchor="middle" font-size="17.500" font-weight="bold" font-family="DejaVu Serif,Liberation Serif,serif" fill="#dea584" stroke="#dea584" stroke-width=".8">R</text></svg><span class="wf">lib.rs </span><svg class="i2" viewBox="0 0 36 38"><circle cx="14.700" cy="20.500" r="14.600" fill="var(--wxc)"/><path stroke="var(--wxx)" stroke-width="2.700" stroke-linecap="round" d="M9.200 15l11 11M20.200 15l-11 11"/></svg></div>
<div class="t" style="left:1728px;top:38px"><svg class="i2" viewBox="0 0 36 38"><circle cx="14.700" cy="20.500" r="13.300" fill="none" stroke="var(--wdim)" stroke-width="2.600" stroke-dasharray="1.450 1.162"/><circle cx="14.700" cy="20.500" r="10.600" fill="none" stroke="var(--wdim)" stroke-width="3.800"/><path fill="var(--wdim)" d="M5 19h5v3h-5zM20 22.500h4.500v2.500h-4.500z"/><text x="15" y="26.800" text-anchor="middle" font-size="17.500" font-weight="bold" font-family="DejaVu Serif,Liberation Serif,serif" fill="var(--wdim)" stroke="var(--wdim)" stroke-width=".8">R</text></svg><span class="wd">main.rs </span><svg class="i2" viewBox="0 0 36 38"><circle cx="14.700" cy="20.500" r="14.600" fill="var(--wxc)"/><path stroke="var(--wxx)" stroke-width="2.700" stroke-linecap="round" d="M9.200 15l11 11M20.200 15l-11 11"/></svg></div>
<div class="t" style="left:414px;top:76px"><span class="nr">   16 </span><span class="k">impl </span><span class="ty">Config </span><span class="pu">{</span></div>
<div class="t" style="left:414px;top:114px"><span class="nr">   15 </span>    <span class="k">pub fn </span><span class="f">build</span><span class="pu">(</span><span class="k">mut </span><span class="p">args</span><span class="pu">: </span><span class="k">impl </span><span class="id">Iterator</span><span class="pu">&lt;</span><span class="id">Item </span><span class="o">= </span><span class="ty">String</span><span class="pu">&gt;) </span><span class="o ar a1">→</span> <span class="ty">Resul</span></div>
<div class="t" style="left:414px;top:152px"><span class="nr">   14 </span>        <span class="p">args</span><span class="o">.</span><span class="fb">next</span><span class="pu">();</span></div>
<div class="t" style="left:414px;top:190px"><span class="nr">   13 </span></div>
<div class="t" style="left:414px;top:228px"><span class="nr">   12 </span>        <span class="k">let </span><span class="v">query </span><span class="o">= </span><span class="k">match </span><span class="p">args</span><span class="o">.</span><span class="fb">next</span><span class="pu">() {</span><span class="h"> :</span></div>
<div class="t" style="left:414px;top:266px"><span class="nr">   11 </span>            <span class="c">Some</span><span class="pu">(</span><span class="v">arg</span><span class="pu">) </span><span class="o ar a2">⇒</span> <span class="v">arg</span><span class="pu">,</span><span class="h"> :</span></div>
<div class="t" style="left:414px;top:304px"><span class="nr">   10 </span>            <span class="c">None </span><span class="o ar a2">⇒</span> <span class="k">return </span><span class="c">Err</span><span class="pu">(</span><span class="s">"Didn't get a query string"</span><span class="pu">),</span></div>
<div class="t" style="left:414px;top:342px"><span class="nr">    9 </span>        <span class="pu">};</span></div>
<div class="t" style="left:414px;top:380px"><span class="nr">    8 </span></div>
<div class="t" style="left:414px;top:418px"><span class="nr">    7 </span>        <span class="k">let </span><span class="v">file_path </span><span class="o">= </span><span class="k">match </span><span class="p">args</span><span class="o">.</span><span class="fb">next</span><span class="pu">() {</span><span class="h"> :</span></div>
<div class="t" style="left:414px;top:456px"><span class="nr">    6 </span>            <span class="c">Some</span><span class="pu">(</span><span class="v">arg</span><span class="pu">) </span><span class="o ar a2">⇒</span> <span class="v">arg</span><span class="pu">,</span><span class="h"> :</span></div>
<div class="t" style="left:414px;top:494px"><span class="nr">    5 </span>            <span class="c">None </span><span class="o ar a2">⇒</span> <span class="k">return </span><span class="c">Err</span><span class="pu">(</span><span class="s">"Didn't get a file path"</span><span class="pu">),</span></div>
<div class="t" style="left:414px;top:532px"><span class="nr">    4 </span>        <span class="pu">};</span></div>
<div class="t" style="left:414px;top:570px"><span class="nr">    3 </span></div>
<div class="t" style="left:414px;top:608px"><span class="nr">    2 </span>        <span class="k">let </span><span class="v">ignore_case </span><span class="o">= </span><span class="id">env</span><span class="o dc">::</span><span class="fb">var</span><span class="pu">(</span><span class="s">"IGNORE_CASE"</span><span class="pu">)</span><span class="o">.</span><span class="fb">is_ok</span><span class="pu">();</span><span class="h"> key :</span></div>
<div class="t" style="left:414px;top:646px"><span class="nr">    1 </span></div>
<div class="t" style="left:414px;top:684px"><span class="cn">   27 </span>        <span class="c">Ok</span><span class="pu">(</span><span class="ty">Config </span><span class="pu">{</span></div>
<div class="t" style="left:414px;top:722px"><span class="nr">    1 </span>            <span class="id">query</span><span class="pu">,</span></div>
<div class="t" style="left:414px;top:760px"><span class="nr">    2 </span>            <span class="id">file_path</span><span class="pu">,</span></div>
<div class="t" style="left:414px;top:798px"><span class="nr">    3 </span>            <span class="id">ignore_case</span><span class="pu">,</span></div>
<div class="t" style="left:414px;top:836px"><span class="nr">    4 </span>        <span class="pu">})</span></div>
<div class="t" style="left:414px;top:874px"><span class="nr">    5 </span>    <span class="pu">}</span></div>
<div class="t" style="left:414px;top:912px"><span class="nr">    6 </span><span class="pu">}</span></div>
<div class="t" style="left:414px;top:950px"><span class="nr">    7 </span></div>
<div class="t" style="left:414px;top:988px"><span class="nr">    8 </span><span class="k">pub fn </span><span class="f">run</span><span class="pu">(</span><span class="p">config</span><span class="pu">: </span><span class="o">&amp;</span><span class="ty">Config</span><span class="pu">) </span><span class="o ar a1">→</span> <span class="ty">Result</span><span class="pu">&lt;(), </span><span class="ty">Box</span><span class="pu">&lt;</span><span class="k">dyn </span><span class="id">Error</span><span class="pu">&gt;&gt; {</span></div>
<div class="t" style="left:414px;top:1026px"><span class="nr">    9 </span>    <span class="k">let </span><span class="v">contents </span><span class="o">= </span><span class="id">fs</span><span class="o dc">::</span><span class="fb">read_to_string</span><span class="pu">(</span><span class="o">&amp;</span><span class="p">config</span><span class="o">.</span><span class="id">file_path</span><span class="pu">)</span><span class="q">?</span><span class="pu">;</span><span class="h"> :</span></div>
<div class="t" style="left:414px;top:1064px"><span class="nr">   10 </span></div>
<div class="t" style="left:414px;top:1102px"><span class="nr">   11 </span>    <span class="k">let </span><span class="v">results </span><span class="o">= </span><span class="kb">if </span><span class="p">config</span><span class="o">.</span><span class="id">ignore_case </span><span class="pu">{</span><span class="h"> :</span></div>
<div class="t" style="left:414px;top:1140px"><span class="nr">   12 </span>        <span class="f">search_case_insensitive</span><span class="pu">(</span><span class="o">&amp;</span><span class="p">config</span><span class="o">.</span><span class="id">query</span><span class="pu">, </span><span class="o">&amp;</span><span class="v">contents</span><span class="pu">)</span></div>
<div class="t" style="left:414px;top:1178px"><span class="nr">   13 </span>    <span class="pu">} </span><span class="kb">else </span><span class="pu">{</span></div>
<div class="t" style="left:414px;top:1216px"><span class="nr">   14 </span>        <span class="f">search</span><span class="pu">(</span><span class="o">&amp;</span><span class="p">config</span><span class="o">.</span><span class="id">query</span><span class="pu">, </span><span class="o">&amp;</span><span class="v">contents</span><span class="pu">)</span></div>
<div class="t" style="left:414px;top:1254px"><span class="nr">   15 </span>    <span class="pu">};</span></div>
<div class="t" style="left:414px;top:1292px"><span class="nr">   16 </span></div>
<div class="t" style="left:414px;top:1330px"><span class="nr">   17 </span>    <span class="kb">for </span><span class="v">line </span><span class="kb">in </span><span class="v">results </span><span class="pu">{</span><span class="h"> : &amp;str</span></div>
<div class="t" style="left:414px;top:1368px"><span class="nr">   18 </span>        <span class="m">println!</span><span class="pu">(</span><span class="s">"{</span><span class="v">line</span><span class="s">}"</span><span class="pu">);</span></div>
<div class="t" style="left:414px;top:1406px"><span class="nr">   19 </span>    <span class="pu">}</span></div>
<div class="t" style="left:414px;top:1444px"><span class="nr">   20 </span></div>
<div class="t" style="left:414px;top:1482px"><span class="nr">   21 </span>    <span class="c">Ok</span><span class="pu">(())</span></div>
<div class="t" style="left:414px;top:1520px"><span class="nr">   22 </span><span class="pu">}</span></div>
<div class="t" style="left:414px;top:1558px"><span class="nr">   23 </span></div>
<div class="t" style="left:1710px;top:76px"><span class="nr">    1 </span><span class="k">use </span><span class="id">std</span><span class="o dc">::</span><span class="id">env</span><span class="pu">;</span></div>
<div class="t" style="left:1710px;top:114px"><span class="nr">    2 </span><span class="k">use </span><span class="id">std</span><span class="o dc">::</span><span class="id">process</span><span class="pu">;</span></div>
<div class="t" style="left:1710px;top:152px"><span class="nr">    3 </span></div>
<div class="t" style="left:1710px;top:190px"><span class="nr">    4 </span><span class="k">use </span><span class="id">minigrep</span><span class="o dc">::</span><span class="ty">Config</span><span class="pu">;</span></div>
<div class="t" style="left:1710px;top:228px"><span class="nr">    5 </span></div>
<div class="t" style="left:1710px;top:266px"><span class="nr">    6 </span><span class="k">fn </span><span class="f">main</span><span class="pu">() {</span></div>
<div class="t" style="left:1710px;top:304px"><span class="nr">    7 </span>    <span class="k">let </span><span class="v">args </span><span class="o">= </span><span class="id">env</span><span class="o dc">::</span><span class="fb">args</span><span class="pu">();</span><span class="h"> :</span></div>
<div class="t" style="left:1710px;top:342px"><span class="nr">    8 </span>    <span class="k">let </span><span class="v">config </span><span class="o">= </span><span class="ty">Config</span><span class="o dc">::</span><span class="f">build</span><span class="pu">(</span><span class="v">args</span><span class="pu">)</span><span class="o">.</span><span class="fb">unwrap_or_else</span><span class="pu">(|</span><span class="p">err</span><span class="pu">| {</span><span class="h"> : &amp;str op</span></div>
<div class="t" style="left:1710px;top:380px"><span class="nr">    9 </span>        <span class="m">eprintln!</span><span class="pu">(</span><span class="s">"Problem parsing arguments: {</span><span class="v">err</span><span class="s">}"</span><span class="pu">);</span></div>
<div class="t" style="left:1710px;top:418px"><span class="nr">   10 </span>        <span class="id">process</span><span class="o dc">::</span><span class="fb">exit</span><span class="pu">(</span><span class="n">1</span><span class="pu">);</span><span class="h"> code</span></div>
<div class="t" style="left:1710px;top:456px"><span class="nr">   11 </span>    <span class="pu">});</span></div>
<div class="t" style="left:1710px;top:494px"><span class="nr">   12 </span></div>
<div class="t" style="left:1710px;top:532px"><span class="nr">   13 </span>    <span class="kb">if </span><span class="k">let </span><span class="c">Err</span><span class="pu">(</span><span class="v">e</span><span class="pu">) </span><span class="o">= </span><span class="id">minigrep</span><span class="o dc">::</span><span class="f">run</span><span class="pu">(</span><span class="o">&amp;</span><span class="v">config</span><span class="pu">) {</span><span class="h"> :</span></div>
<div class="t" style="left:1710px;top:570px"><span class="nr">   14 </span>        <span class="m">eprintln!</span><span class="pu">(</span><span class="s">"Application error: {</span><span class="v">e</span><span class="s">}"</span><span class="pu">);</span></div>
<div class="t" style="left:1710px;top:608px"><span class="nr">   15 </span>        <span class="id">process</span><span class="o dc">::</span><span class="fb">exit</span><span class="pu">(</span><span class="n">1</span><span class="pu">);</span><span class="h"> code</span></div>
<div class="t" style="left:1710px;top:646px"><span class="nr">   16 </span>    <span class="pu">}</span></div>
<div class="t" style="left:1710px;top:684px"><span class="nr">   17 </span><span class="pu">}</span></div>
<div class="t" style="left:1710px;top:722px"><span class="nr">   18 </span></div>
<div class="t" style="left:0px;top:1596px"> <svg class="i2" viewBox="0 0 36 38"><circle cx="14.400" cy="20.900" r="13.600" fill="#e82424"/><path fill="#e82424" d="M.2 6.200C.8 9 1.600 12 3 15L9.500 8.600C5.800 8.600 2.600 7.800.2 6.200z"/><path fill="#e82424" d="M28.700 6C29.300 9.800 28.500 13.500 26.800 16.800L18 8.200C22.500 8.800 26.300 8 28.700 6z"/><path fill="none" stroke="var(--mp)" stroke-width="1.200" d="M19.800 9.800c2.800 1.200 5 3.500 6.200 6.300"/></svg> <span class="md">N</span>  <span class="sb">l </span><svg class="i2" viewBox="0 0 36 38"><path fill="var(--stfg)" d="M1.500 8h11a1.500 1.500 0 0 1 1.500 1.500v2.500h-15v-2.500a1.500 1.500 0 0 1 1.500-1.500zM0 12.800h29v18a2 2 0 0 1-2 2h-25a2 2 0 0 1-2-2z"/></svg><span class="sb">~/misc/rust/minigrep/src/ </span><svg class="i2" viewBox="0 0 36 38"><circle cx="14.700" cy="20.500" r="13.300" fill="none" stroke="#dea584" stroke-width="2.600" stroke-dasharray="1.450 1.162"/><circle cx="14.700" cy="20.500" r="10.600" fill="none" stroke="#dea584" stroke-width="3.800"/><path fill="#dea584" d="M5 19h5v3h-5zM20 22.500h4.500v2.500h-4.500z"/><text x="15" y="26.800" text-anchor="middle" font-size="17.500" font-weight="bold" font-family="DejaVu Serif,Liberation Serif,serif" fill="#dea584" stroke="#dea584" stroke-width=".8">R</text></svg><span class="sf">lib.rs </span><svg class="i2" viewBox="0 0 36 38"><g fill="none" stroke="var(--br)"><path stroke-width="4" d="M8.300 14v14M20.500 18.500c0 7.500-12.200 3.500-12.200 10"/><g stroke-width="2.600"><circle cx="8.300" cy="10.700" r="3.100"/><circle cx="8.300" cy="31.300" r="3.100"/><circle cx="20.500" cy="15.300" r="3.100"/></g></g></svg><span class="sg">master</span></div>
<div class="t" style="left:1530px;top:1596px"><svg class="i2" viewBox="0 0 36 38"><text x="15" y="29" text-anchor="middle" font-size="31" font-weight="bold" letter-spacing="-2.500" font-family="DejaVu Sans Mono,Liberation Mono,monospace" fill="var(--c1)">{}</text></svg><span class="s1">impl Config </span><span class="s2">→ </span><span class="s3"><i>ƒ</i> build</span></div>
<div class="t" style="left:2520px;top:1596px"><svg class="i2" viewBox="0 0 36 38"><path fill="var(--lsp)" fill-rule="evenodd" d="M25.0 17.2L28.6 17.4L28.6 23.0L25.0 23.2L24.1 25.5L26.5 28.2L22.5 32.2L19.8 29.8L17.5 30.7L17.3 34.3L11.7 34.3L11.5 30.7L9.2 29.8L6.5 32.2L2.5 28.2L4.9 25.5L4.0 23.2L0.4 23.0L0.4 17.4L4.0 17.2L4.9 14.9L2.5 12.2L6.5 8.2L9.2 10.6L11.5 9.7L11.7 6.1L17.3 6.1L17.5 9.7L19.8 10.6L22.5 8.2L26.5 12.2L24.1 14.9ZM8.5 20.2a6.0 6.0 0 1 0 12.0 0a6.0 6.0 0 1 0 -12.0 0Z"/></svg><span class="sl">[LSP] </span><span class="sft">RUST   </span><span class="sp">27/106: 4 16% </span></div></div></div>
<div class="w W act" style="left:1556px;top:1509px;width:3131px;height:1702px"><div class="g" style="left:27px;top:31px;font-size:31.56px;line-height:40px;--cw:19px;--lh:40px;--ts:0px"><div class="b" style="left:425.5px;top:40px;width:4px;height:1560px;background:var(--sep);"></div>
<div class="b" style="left:1793.5px;top:40px;width:4px;height:1560px;background:var(--sep);"></div>
<div class="b" style="left:437px;top:80px;width:114px;height:1520px;background:var(--gut);"></div>
<div class="b" style="left:1805px;top:80px;width:114px;height:720px;background:var(--gut);"></div>
<div class="b" style="left:0px;top:0px;width:418px;height:40px;background:var(--hbg);"></div>
<div class="b" style="left:418px;top:0px;width:380px;height:40px;background:var(--tab);clip-path:polygon(19px 0,calc(100% - 19px) 0,100% 100%,0 100%)"></div>
<div class="b" style="left:798px;top:0px;width:342px;height:40px;background:var(--tsel);clip-path:polygon(19px 0,calc(100% - 19px) 0,100% 100%,0 100%)"></div>
<div class="b" style="left:1140px;top:0px;width:361px;height:40px;background:var(--tab);clip-path:polygon(19px 0,calc(100% - 19px) 0,100% 100%,0 100%)"></div>
<div class="b" style="left:437px;top:40px;width:247px;height:40px;background:var(--pill);border-radius:20px"></div>
<div class="b" style="left:1805px;top:40px;width:266px;height:40px;background:var(--pill);border-radius:20px"></div>
<div class="b" style="left:551px;top:80px;width:1235px;height:40px;background:var(--ctx);"></div>
<div class="b" style="left:551px;top:120px;width:1235px;height:40px;background:var(--ctx);"></div>
<div class="b" style="left:551px;top:680px;width:1235px;height:40px;background:var(--cl);"></div>
<div class="b" style="left:608px;top:680px;width:19px;height:40px;background:var(--cur);"></div>
<div class="b" style="left:551px;top:160px;width:1235px;height:0px;background:var(--bg);"></div>
<div class="b" style="left:559.5px;top:160px;width:2px;height:760px;background:var(--ig);"></div>
<div class="b" style="left:559.5px;top:1040px;width:2px;height:520px;background:var(--ig);"></div>
<div class="b" style="left:635.5px;top:160px;width:2px;height:720px;background:var(--igs);"></div>
<div class="b" style="left:635.5px;top:1160px;width:2px;height:40px;background:var(--ig);"></div>
<div class="b" style="left:635.5px;top:1240px;width:2px;height:40px;background:var(--ig);"></div>
<div class="b" style="left:635.5px;top:1400px;width:2px;height:40px;background:var(--ig);"></div>
<div class="b" style="left:711.5px;top:240px;width:2px;height:80px;background:var(--ig);"></div>
<div class="b" style="left:711.5px;top:440px;width:2px;height:80px;background:var(--ig);"></div>
<div class="b" style="left:711.5px;top:720px;width:2px;height:120px;background:var(--ig);"></div>
<div class="b" style="left:1927.5px;top:320px;width:2px;height:400px;background:var(--ig);"></div>
<div class="b" style="left:2003.5px;top:400px;width:2px;height:80px;background:var(--ig);"></div>
<div class="b" style="left:2003.5px;top:600px;width:2px;height:80px;background:var(--ig);"></div>
<div class="b" style="left:0px;top:1600px;width:3078px;height:40px;background:var(--stl);"></div>
<div class="b" style="left:0px;top:1600px;width:114px;height:40px;background:var(--mp);border-radius:20px"></div>
<div class="b" style="left:3040px;top:1600px;width:38px;height:40px;background:var(--pill);"></div>
<div class="b" style="left:3040px;top:1610px;width:38px;height:5px;background:var(--sbar);"></div>
<div class="t" style="left:0px;top:0px"><span class="hf">       NvimTree</span></div>
<div class="t" style="left:437px;top:0px"><span class="tn">24. </span><svg class="i2" viewBox="0 0 36 38"><rect x="0" y="11.500" width="29" height="18.800" rx="2.500" fill="#fff"/><text x="14.500" y="26.300" text-anchor="middle" font-size="14.500" font-weight="bold" font-family="DejaVu Sans,Liberation Sans,sans-serif" fill="var(--mdfg)" stroke="var(--mdfg)" stroke-width=".7">M↓</text></svg><span class="ti">README.md </span><svg class="i2" viewBox="0 0 36 38"><circle cx="14.700" cy="20.500" r="14.600" fill="var(--xc)"/><path stroke="var(--xx)" stroke-width="2.700" stroke-linecap="round" d="M9.200 15l11 11M20.200 15l-11 11"/></svg>  <span class="tn">143. </span><svg class="i2" viewBox="0 0 36 38"><circle cx="14.700" cy="20.500" r="13.300" fill="none" stroke="#dea584" stroke-width="2.600" stroke-dasharray="1.450 1.162"/><circle cx="14.700" cy="20.500" r="10.600" fill="none" stroke="#dea584" stroke-width="3.800"/><path fill="#dea584" d="M5 19h5v3h-5zM20 22.500h4.500v2.500h-4.500z"/><text x="15" y="26.800" text-anchor="middle" font-size="17.500" font-weight="bold" font-family="DejaVu Serif,Liberation Serif,serif" fill="#dea584" stroke="#dea584" stroke-width=".8">R</text></svg><span class="ta">lib.rs </span><svg class="i2" viewBox="0 0 36 38"><circle cx="14.700" cy="20.500" r="14.600" fill="var(--xc)"/><path stroke="var(--xs)" stroke-width="2.700" stroke-linecap="round" d="M9.200 15l11 11M20.200 15l-11 11"/></svg>  <span class="tn">162. </span><svg class="i2" viewBox="0 0 36 38"><circle cx="14.700" cy="20.500" r="13.300" fill="none" stroke="#dea584" stroke-width="2.600" stroke-dasharray="1.450 1.162"/><circle cx="14.700" cy="20.500" r="10.600" fill="none" stroke="#dea584" stroke-width="3.800"/><path fill="#dea584" d="M5 19h5v3h-5zM20 22.500h4.500v2.500h-4.500z"/><text x="15" y="26.800" text-anchor="middle" font-size="17.500" font-weight="bold" font-family="DejaVu Serif,Liberation Serif,serif" fill="#dea584" stroke="#dea584" stroke-width=".8">R</text></svg><span class="ti tb">main.rs </span><svg class="i2" viewBox="0 0 36 38"><circle cx="14.700" cy="20.500" r="14.600" fill="var(--xc)"/><path stroke="var(--xx)" stroke-width="2.700" stroke-linecap="round" d="M9.200 15l11 11M20.200 15l-11 11"/></svg></div>
<div class="t" style="left:0px;top:40px">  <span class="rt">~/misc/rust/..</span></div>
<div class="t" style="left:0px;top:80px">  <svg class="i2" viewBox="0 0 36 38"><path fill="none" stroke="#8094b4" stroke-width="3.6" d="M6.6 16l7.6 7.8 7.6-7.8"/></svg><svg class="i2" viewBox="0 0 36 38"><path fill="#8094b4" d="M0 8h10l3 3h11.5v4.5H6.5L0 29zM7.5 17.5H30l-6.5 14.5H1z"/></svg><span class="dr">minigrep</span></div>
<div class="t" style="left:0px;top:120px">    <svg class="i2" viewBox="0 0 36 38"><path fill="none" stroke="#8094b4" stroke-width="3.6" d="M8.8 14.5l7.6 7.3-7.6 7.3"/></svg><svg class="i2" viewBox="0 0 36 38"><path fill="#8094b4" d="M0 9h11.5l3.5 3.5h14v19.5h-29z"/></svg><span class="dr">.git</span></div>
<div class="t" style="left:0px;top:160px">    <svg class="i2" viewBox="0 0 36 38"><path fill="none" stroke="#8094b4" stroke-width="3.6" d="M8.8 14.5l7.6 7.3-7.6 7.3"/></svg><svg class="i2" viewBox="0 0 36 38"><path fill="#8094b4" d="M0 9h11.5l3.5 3.5h14v19.5h-29z"/></svg><span class="dr">src</span></div>
<div class="t" style="left:0px;top:200px">      <svg class="i2" viewBox="0 0 36 38"><rect x="3.6" y="9.3" width="21.8" height="21.8" rx="2.6" fill="#41535b" transform="rotate(45 14.5 20.2)"/><path fill="none" stroke="var(--bg)" stroke-width="2" d="M10.5 12.5l4 4v11M14.5 16.5l4.5 4"/><circle cx="14.5" cy="27.5" r="2.2" fill="var(--bg)"/><circle cx="19.3" cy="21" r="2.2" fill="var(--bg)"/><circle cx="14.5" cy="16.3" r="2.2" fill="var(--bg)"/></svg>.gitignore</div>
<div class="t" style="left:0px;top:240px">      <svg class="i2" viewBox="0 0 36 38"><rect x="3.6" y="20.5" width="21.6" height="14" rx="2" fill="#bbb"/><path fill="none" stroke="#bbb" stroke-width="4" d="M8.5 21v-5.5a6.3 6.3 0 0 1 12.6 0v1.8"/></svg>Cargo.lock</div>
<div class="t" style="left:0px;top:280px">      <svg class="i2" viewBox="0 0 36 38"><path fill="#6d8086" fill-rule="evenodd" d="M25.0 17.2L28.6 17.4L28.6 23.0L25.0 23.2L24.1 25.5L26.5 28.2L22.5 32.2L19.8 29.8L17.5 30.7L17.3 34.3L11.7 34.3L11.5 30.7L9.2 29.8L6.5 32.2L2.5 28.2L4.9 25.5L4.0 23.2L0.4 23.0L0.4 17.4L4.0 17.2L4.9 14.9L2.5 12.2L6.5 8.2L9.2 10.6L11.5 9.7L11.7 6.1L17.3 6.1L17.5 9.7L19.8 10.6L22.5 8.2L26.5 12.2L24.1 14.9ZM8.5 20.2a6.0 6.0 0 1 0 12.0 0a6.0 6.0 0 1 0 -12.0 0Z"/></svg><span class="tm">Cargo.toml</span></div>
<div class="t" style="left:0px;top:320px">      <svg class="i2" viewBox="0 0 36 38"><path fill="#89e051" fill-rule="evenodd" d="M4.5 6h12.5l9.5 9.5v16.5a2.5 2.5 0 0 1-2.500 2.500h-19.500a2.500 2.500 0 0 1-2.500-2.500v-23.500a2.500 2.500 0 0 1 2.500-2.500zM16 8v8.500h8.500zM7 20.500v2.600h15v-2.600zM7 26.500v2.600h15v-2.600z"/></svg>poem.txt</div>
<div class="t" style="left:0px;top:360px">  <svg class="i2" viewBox="0 0 36 38"><path fill="none" stroke="#8094b4" stroke-width="3.6" d="M8.8 14.5l7.6 7.3-7.6 7.3"/></svg><svg class="i2" viewBox="0 0 36 38"><path fill="#8094b4" d="M0 9h11.5l3.5 3.5h14v19.5h-29z"/></svg><span class="dr">scratch</span></div>
<div class="t" style="left:456px;top:40px"><svg class="i2" viewBox="0 0 36 38"><circle cx="14.700" cy="20.500" r="13.300" fill="none" stroke="#dea584" stroke-width="2.600" stroke-dasharray="1.450 1.162"/><circle cx="14.700" cy="20.500" r="10.600" fill="none" stroke="#dea584" stroke-width="3.800"/><path fill="#dea584" d="M5 19h5v3h-5zM20 22.500h4.500v2.500h-4.500z"/><text x="15" y="26.800" text-anchor="middle" font-size="17.500" font-weight="bold" font-family="DejaVu Serif,Liberation Serif,serif" fill="#dea584" stroke="#dea584" stroke-width=".8">R</text></svg><span class="wf">lib.rs </span><svg class="i2" viewBox="0 0 36 38"><circle cx="14.700" cy="20.500" r="14.600" fill="var(--wxc)"/><path stroke="var(--wxx)" stroke-width="2.700" stroke-linecap="round" d="M9.200 15l11 11M20.200 15l-11 11"/></svg></div>
<div class="t" style="left:1824px;top:40px"><svg class="i2" viewBox="0 0 36 38"><circle cx="14.700" cy="20.500" r="13.300" fill="none" stroke="var(--wdim)" stroke-width="2.600" stroke-dasharray="1.450 1.162"/><circle cx="14.700" cy="20.500" r="10.600" fill="none" stroke="var(--wdim)" stroke-width="3.800"/><path fill="var(--wdim)" d="M5 19h5v3h-5zM20 22.500h4.500v2.500h-4.500z"/><text x="15" y="26.800" text-anchor="middle" font-size="17.500" font-weight="bold" font-family="DejaVu Serif,Liberation Serif,serif" fill="var(--wdim)" stroke="var(--wdim)" stroke-width=".8">R</text></svg><span class="wd">main.rs </span><svg class="i2" viewBox="0 0 36 38"><circle cx="14.700" cy="20.500" r="14.600" fill="var(--wxc)"/><path stroke="var(--wxx)" stroke-width="2.700" stroke-linecap="round" d="M9.200 15l11 11M20.200 15l-11 11"/></svg></div>
<div class="t" style="left:437px;top:80px"><span class="nr">   16 </span><span class="k">impl </span><span class="ty">Config </span><span class="pu">{</span></div>
<div class="t" style="left:437px;top:120px"><span class="nr">   15 </span>    <span class="k">pub fn </span><span class="f">build</span><span class="pu">(</span><span class="ty">mut </span><span class="p">args</span><span class="pu">: </span><span class="k">impl </span><span class="ty">Iterator</span><span class="pu">&lt;</span><span class="ty">Item </span><span class="o">= </span><span class="ty">String</span><span class="pu">&gt;) </span><span class="o ar a1">→</span> <span class="ty">Resul</span></div>
<div class="t" style="left:437px;top:160px"><span class="nr">   13 </span></div>
<div class="t" style="left:437px;top:200px"><span class="nr">   12 </span>        <span class="k">let </span><span class="v">query </span><span class="o">= </span><span class="k">match </span><span class="p">args</span><span class="o">.</span><span class="fb">next</span><span class="pu">() {</span><span class="h"> :</span></div>
<div class="t" style="left:437px;top:240px"><span class="nr">   11 </span>            <span class="c">Some</span><span class="pu">(</span><span class="v">arg</span><span class="pu">) </span><span class="o ar a2">⇒</span> <span class="v">arg</span><span class="pu">,</span><span class="h"> :</span></div>
<div class="t" style="left:437px;top:280px"><span class="nr">   10 </span>            <span class="c">None </span><span class="o ar a2">⇒</span> <span class="k">return </span><span class="c">Err</span><span class="pu">(</span><span class="s">"Didn't get a query string"</span><span class="pu">),</span></div>
<div class="t" style="left:437px;top:320px"><span class="nr">    9 </span>        <span class="pu">};</span></div>
<div class="t" style="left:437px;top:360px"><span class="nr">    8 </span></div>
<div class="t" style="left:437px;top:400px"><span class="nr">    7 </span>        <span class="k">let </span><span class="v">file_path </span><span class="o">= </span><span class="k">match </span><span class="p">args</span><span class="o">.</span><span class="fb">next</span><span class="pu">() {</span><span class="h"> :</span></div>
<div class="t" style="left:437px;top:440px"><span class="nr">    6 </span>            <span class="c">Some</span><span class="pu">(</span><span class="v">arg</span><span class="pu">) </span><span class="o ar a2">⇒</span> <span class="v">arg</span><span class="pu">,</span><span class="h"> :</span></div>
<div class="t" style="left:437px;top:480px"><span class="nr">    5 </span>            <span class="c">None </span><span class="o ar a2">⇒</span> <span class="k">return </span><span class="c">Err</span><span class="pu">(</span><span class="s">"Didn't get a file path"</span><span class="pu">),</span></div>
<div class="t" style="left:437px;top:520px"><span class="nr">    4 </span>        <span class="pu">};</span></div>
<div class="t" style="left:437px;top:560px"><span class="nr">    3 </span></div>
<div class="t" style="left:437px;top:600px"><span class="nr">    2 </span>        <span class="k">let </span><span class="v">ignore_case </span><span class="o">= </span><span class="id">env</span><span class="o dc">::</span><span class="fb">var</span><span class="pu">(</span><span class="s">"IGNORE_CASE"</span><span class="pu">)</span><span class="o">.</span><span class="fb">is_ok</span><span class="pu">();</span><span class="h"> key :</span></div>
<div class="t" style="left:437px;top:640px"><span class="nr">    1 </span></div>
<div class="t" style="left:437px;top:680px"><span class="cn">   27 </span>        <span class="c">Ok</span><span class="pu">(</span><span class="ty">Config </span><span class="pu">{</span></div>
<div class="t" style="left:437px;top:720px"><span class="nr">    1 </span>            <span class="id">query</span><span class="pu">,</span></div>
<div class="t" style="left:437px;top:760px"><span class="nr">    2 </span>            <span class="id">file_path</span><span class="pu">,</span></div>
<div class="t" style="left:437px;top:800px"><span class="nr">    3 </span>            <span class="id">ignore_case</span><span class="pu">,</span></div>
<div class="t" style="left:437px;top:840px"><span class="nr">    4 </span>        <span class="pu">})</span></div>
<div class="t" style="left:437px;top:880px"><span class="nr">    5 </span>    <span class="pu">}</span></div>
<div class="t" style="left:437px;top:920px"><span class="nr">    6 </span><span class="pu">}</span></div>
<div class="t" style="left:437px;top:960px"><span class="nr">    7 </span></div>
<div class="t" style="left:437px;top:1000px"><span class="nr">    8 </span><span class="k">pub fn </span><span class="f">run</span><span class="pu">(</span><span class="p">config</span><span class="pu">: </span><span class="o">&amp;</span><span class="ty">Config</span><span class="pu">) </span><span class="o ar a1">→</span> <span class="ty">Result</span><span class="pu">&lt;(), </span><span class="ty">Box</span><span class="pu">&lt;</span><span class="k">dyn </span><span class="id">Error</span><span class="pu">&gt;&gt; {</span></div>
<div class="t" style="left:437px;top:1040px"><span class="nr">    9 </span>    <span class="k">let </span><span class="v">contents </span><span class="o">= </span><span class="id">fs</span><span class="o dc">::</span><span class="fb">read_to_string</span><span class="pu">(</span><span class="o">&amp;</span><span class="p">config</span><span class="o">.</span><span class="id">file_path</span><span class="pu">)</span><span class="q">?</span><span class="pu">;</span><span class="h"> :</span></div>
<div class="t" style="left:437px;top:1080px"><span class="nr">   10 </span></div>
<div class="t" style="left:437px;top:1120px"><span class="nr">   11 </span>    <span class="k">let </span><span class="v">results </span><span class="o">= </span><span class="kb">if </span><span class="p">config</span><span class="o">.</span><span class="id">ignore_case </span><span class="pu">{</span><span class="h"> :</span></div>
<div class="t" style="left:437px;top:1160px"><span class="nr">   12 </span>        <span class="f">search_case_insensitive</span><span class="pu">(</span><span class="o">&amp;</span><span class="p">config</span><span class="o">.</span><span class="id">query</span><span class="pu">, </span><span class="o">&amp;</span><span class="v">contents</span><span class="pu">)</span></div>
<div class="t" style="left:437px;top:1200px"><span class="nr">   13 </span>    <span class="pu">} </span><span class="kb">else </span><span class="pu">{</span></div>
<div class="t" style="left:437px;top:1240px"><span class="nr">   14 </span>        <span class="f">search</span><span class="pu">(</span><span class="o">&amp;</span><span class="p">config</span><span class="o">.</span><span class="id">query</span><span class="pu">, </span><span class="o">&amp;</span><span class="v">contents</span><span class="pu">)</span></div>
<div class="t" style="left:437px;top:1280px"><span class="nr">   15 </span>    <span class="pu">};</span></div>
<div class="t" style="left:437px;top:1320px"><span class="nr">   16 </span></div>
<div class="t" style="left:437px;top:1360px"><span class="nr">   17 </span>    <span class="kb">for </span><span class="v">line </span><span class="kb">in </span><span class="v">results </span><span class="pu">{</span><span class="h"> : &amp;str</span></div>
<div class="t" style="left:437px;top:1400px"><span class="nr">   18 </span>        <span class="m">println!</span><span class="pu">(</span><span class="s">"{</span><span class="v">line</span><span class="s">}"</span><span class="pu">);</span></div>
<div class="t" style="left:437px;top:1440px"><span class="nr">   19 </span>    <span class="pu">}</span></div>
<div class="t" style="left:437px;top:1480px"><span class="nr">   20 </span></div>
<div class="t" style="left:437px;top:1520px"><span class="nr">   21 </span>    <span class="c">Ok</span><span class="pu">(())</span></div>
<div class="t" style="left:437px;top:1560px"><span class="nr">   22 </span><span class="pu">}</span></div>
<div class="t" style="left:1805px;top:80px"><span class="nr">    1 </span><span class="k">use </span><span class="id">std</span><span class="o dc">::</span><span class="id">env</span><span class="pu">;</span></div>
<div class="t" style="left:1805px;top:120px"><span class="nr">    2 </span><span class="k">use </span><span class="id">std</span><span class="o dc">::</span><span class="id">process</span><span class="pu">;</span></div>
<div class="t" style="left:1805px;top:160px"><span class="nr">    3 </span></div>
<div class="t" style="left:1805px;top:200px"><span class="nr">    4 </span><span class="k">use </span><span class="id">minigrep</span><span class="o dc">::</span><span class="ty">Config</span><span class="pu">;</span></div>
<div class="t" style="left:1805px;top:240px"><span class="nr">    5 </span></div>
<div class="t" style="left:1805px;top:280px"><span class="nr">    6 </span><span class="k">fn </span><span class="f">main</span><span class="pu">() {</span></div>
<div class="t" style="left:1805px;top:320px"><span class="nr">    7 </span>    <span class="k">let </span><span class="v">args </span><span class="o">= </span><span class="id">env</span><span class="o dc">::</span><span class="fb">args</span><span class="pu">();</span><span class="h"> :</span></div>
<div class="t" style="left:1805px;top:360px"><span class="nr">    8 </span>    <span class="k">let </span><span class="v">config </span><span class="o">= </span><span class="ty">Config</span><span class="o dc">::</span><span class="f">build</span><span class="pu">(</span><span class="v">args</span><span class="pu">)</span><span class="o">.</span><span class="fb">unwrap_or_else</span><span class="pu">(|</span><span class="p">err</span><span class="pu">| {</span><span class="h"> :</span></div>
<div class="t" style="left:1805px;top:400px"><span class="nr">    9 </span>        <span class="m">eprintln!</span><span class="pu">(</span><span class="s">"Problem parsing arguments: {</span><span class="v">err</span><span class="s">}"</span><span class="pu">);</span></div>
<div class="t" style="left:1805px;top:440px"><span class="nr">   10 </span>        <span class="id">process</span><span class="o dc">::</span><span class="fb">exit</span><span class="pu">(</span><span class="n">1</span><span class="pu">);</span><span class="h"> code</span></div>
<div class="t" style="left:1805px;top:480px"><span class="nr">   11 </span>    <span class="pu">});</span></div>
<div class="t" style="left:1805px;top:520px"><span class="nr">   12 </span></div>
<div class="t" style="left:1805px;top:560px"><span class="nr">   13 </span>    <span class="kb">if </span><span class="k">let </span><span class="c">Err</span><span class="pu">(</span><span class="v">e</span><span class="pu">) </span><span class="o">= </span><span class="id">minigrep</span><span class="o dc">::</span><span class="f">run</span><span class="pu">(</span><span class="o">&amp;</span><span class="v">config</span><span class="pu">) {</span><span class="h"> :</span></div>
<div class="t" style="left:1805px;top:600px"><span class="nr">   14 </span>        <span class="m">eprintln!</span><span class="pu">(</span><span class="s">"Application error: {</span><span class="v">e</span><span class="s">}"</span><span class="pu">);</span></div>
<div class="t" style="left:1805px;top:640px"><span class="nr">   15 </span>        <span class="id">process</span><span class="o dc">::</span><span class="fb">exit</span><span class="pu">(</span><span class="n">1</span><span class="pu">);</span><span class="h"> code</span></div>
<div class="t" style="left:1805px;top:680px"><span class="nr">   16 </span>    <span class="pu">}</span></div>
<div class="t" style="left:1805px;top:720px"><span class="nr">   17 </span><span class="pu">}</span></div>
<div class="t" style="left:1805px;top:760px"><span class="nr">   18 </span></div>
<div class="t" style="left:0px;top:1600px"> <svg class="i2" viewBox="0 0 36 38"><circle cx="14.400" cy="20.900" r="13.600" fill="#e82424"/><path fill="#e82424" d="M.2 6.200C.8 9 1.600 12 3 15L9.500 8.600C5.800 8.600 2.600 7.800.2 6.200z"/><path fill="#e82424" d="M28.700 6C29.300 9.800 28.500 13.500 26.800 16.800L18 8.200C22.500 8.800 26.300 8 28.700 6z"/><path fill="none" stroke="var(--mp)" stroke-width="1.200" d="M19.800 9.800c2.800 1.200 5 3.500 6.200 6.300"/></svg> <span class="md">N</span>  <span class="sb">l </span><svg class="i2" viewBox="0 0 36 38"><path fill="var(--stfg)" d="M1.500 8h11a1.500 1.500 0 0 1 1.500 1.500v2.500h-15v-2.500a1.500 1.500 0 0 1 1.500-1.500zM0 12.800h29v18a2 2 0 0 1-2 2h-25a2 2 0 0 1-2-2z"/></svg><span class="sb">~/misc/rust/minigrep/src/ </span><svg class="i2" viewBox="0 0 36 38"><circle cx="14.700" cy="20.500" r="13.300" fill="none" stroke="#dea584" stroke-width="2.600" stroke-dasharray="1.450 1.162"/><circle cx="14.700" cy="20.500" r="10.600" fill="none" stroke="#dea584" stroke-width="3.800"/><path fill="#dea584" d="M5 19h5v3h-5zM20 22.500h4.500v2.500h-4.500z"/><text x="15" y="26.800" text-anchor="middle" font-size="17.500" font-weight="bold" font-family="DejaVu Serif,Liberation Serif,serif" fill="#dea584" stroke="#dea584" stroke-width=".8">R</text></svg><span class="sf">lib.rs </span><svg class="i2" viewBox="0 0 36 38"><g fill="none" stroke="var(--br)"><path stroke-width="4" d="M8.300 14v14M20.500 18.500c0 7.500-12.200 3.500-12.200 10"/><g stroke-width="2.600"><circle cx="8.300" cy="10.700" r="3.100"/><circle cx="8.300" cy="31.300" r="3.100"/><circle cx="20.500" cy="15.300" r="3.100"/></g></g></svg><span class="sg">master</span></div>
<div class="t" style="left:1539px;top:1600px"><svg class="i2" viewBox="0 0 36 38"><text x="15" y="29" text-anchor="middle" font-size="31" font-weight="bold" letter-spacing="-2.500" font-family="DejaVu Sans Mono,Liberation Mono,monospace" fill="var(--c1)">{}</text></svg><span class="s1">impl Config </span><span class="s2">→ </span><span class="s3"><i>ƒ</i> build</span></div>
<div class="t" style="left:2489px;top:1600px"><svg class="i2" viewBox="0 0 36 38"><path fill="var(--lsp)" fill-rule="evenodd" d="M25.0 17.2L28.6 17.4L28.6 23.0L25.0 23.2L24.1 25.5L26.5 28.2L22.5 32.2L19.8 29.8L17.5 30.7L17.3 34.3L11.7 34.3L11.5 30.7L9.2 29.8L6.5 32.2L2.5 28.2L4.9 25.5L4.0 23.2L0.4 23.0L0.4 17.4L4.0 17.2L4.9 14.9L2.5 12.2L6.5 8.2L9.2 10.6L11.5 9.7L11.7 6.1L17.3 6.1L17.5 9.7L19.8 10.6L22.5 8.2L26.5 12.2L24.1 14.9ZM8.5 20.2a6.0 6.0 0 1 0 12.0 0a6.0 6.0 0 1 0 -12.0 0Z"/></svg><span class="sl">[LSP] </span><span class="sft">RUST   </span><span class="sp">27/106: 4 16% </span></div></div></div>
</body></html>
